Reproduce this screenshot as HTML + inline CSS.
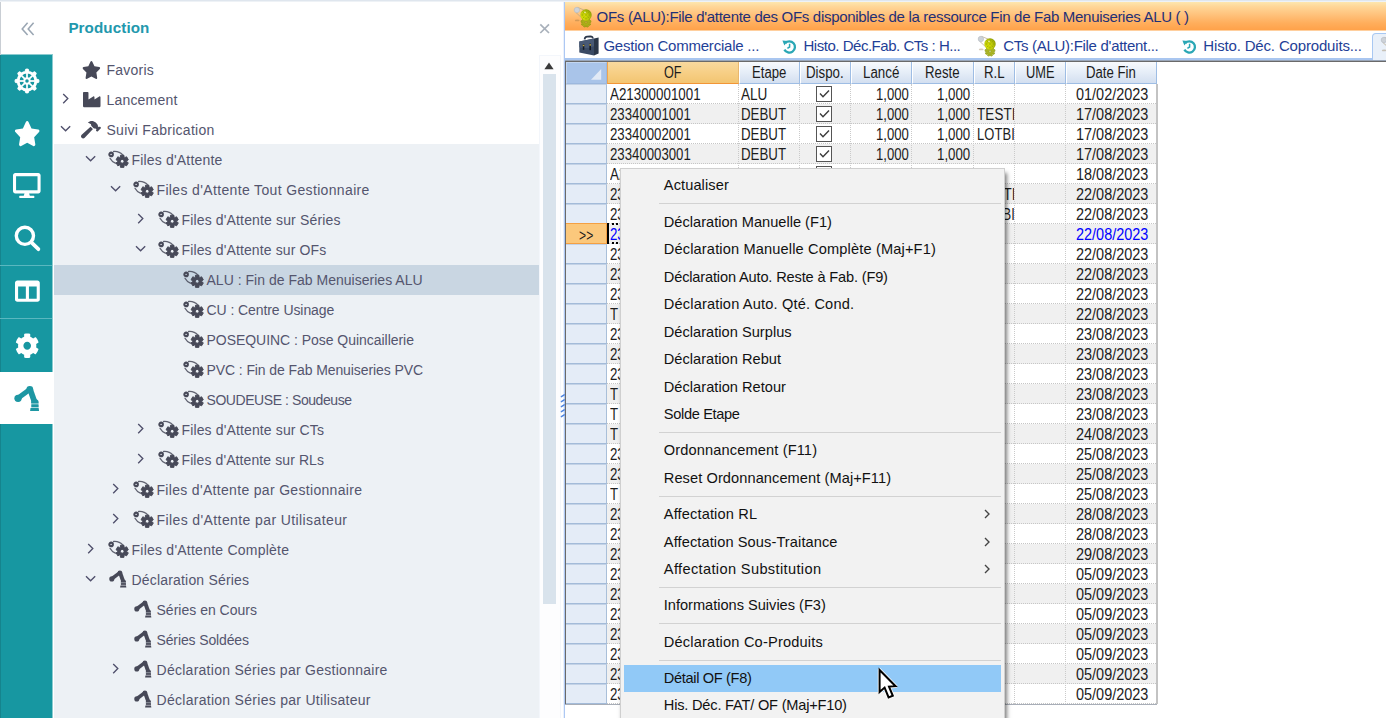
<!DOCTYPE html>
<html lang="fr"><head><meta charset="utf-8"><title>Production</title>
<style>
html,body{margin:0;padding:0}
body{width:1386px;height:718px;overflow:hidden;background:#fff;position:relative;font-family:"Liberation Sans", sans-serif}
.t{position:absolute;white-space:pre;margin:0}
svg{display:block;overflow:visible}
</style></head><body>
<div style="position:absolute;left:54px;top:144px;width:486px;height:574px;background:#edf1f5"></div>
<div style="position:absolute;left:54px;top:265px;width:486px;height:30px;background:#c9d6e2"></div>
<svg style="position:absolute;left:82.3px;top:61.0px" width="18.8" height="18.0" viewBox="0 0 576 512" preserveAspectRatio="none"><path fill="#474958" d="M259.3 17.8L194 150.2 47.9 171.5c-26.2 3.8-36.7 36.1-17.7 54.6l105.7 103-25 145.5c-4.500 26.300 23.200 46 46.400 33.700L288 439.600l130.700 68.700c23.200 12.200 50.900-7.400 46.400-33.700l-25-145.500 105.700-103c19-18.500 8.500-50.800-17.700-54.600L382 150.200 316.700 17.800c-11.700-23.600-45.600-23.900-57.400 0z"/></svg>
<div class="t" style="left:106.50px;top:60.10px;font-size:14px;line-height:20px;color:#54556e;letter-spacing:0.232px;">Favoris</div>
<svg style="position:absolute;left:61.7px;top:93.4px" width="7" height="11.2" viewBox="0 0 7 11.2" ><path d="M1.2 1 L5.8 5.6 L1.2 10.2" fill="none" stroke="#4f4f6b" stroke-width="1.35"/></svg>
<svg style="position:absolute;left:82.9px;top:91.8px" width="17.5" height="15.2" viewBox="0 32 512 448" preserveAspectRatio="none"><path fill="#474958" d="M475.115 163.781L336 252.309v-68.280c0-18.916-20.931-30.399-36.885-20.248L160 252.309V56c0-13.255-10.745-24-24-24H24C10.745 32 0 42.745 0 56v400c0 13.255 10.745 24 24 24h464c13.255 0 24-10.745 24-24V184.029c0-18.917-20.931-30.399-36.885-20.248z"/></svg>
<div class="t" style="left:106.50px;top:90.10px;font-size:14px;line-height:20px;color:#54556e;letter-spacing:0.190px;">Lancement</div>
<svg style="position:absolute;left:60.1px;top:124.69999999999999px" width="11.2" height="7" viewBox="0 0 11.2 7" ><path d="M1 1.2 L5.6 5.8 L10.2 1.2" fill="none" stroke="#4f4f6b" stroke-width="1.35"/></svg>
<svg style="position:absolute;left:81.4px;top:120.8px" width="20" height="17.4" viewBox="0 0 576 512" preserveAspectRatio="none"><path fill="#474958" d="M571.31 193.94l-22.63-22.63c-6.25-6.25-16.38-6.25-22.63 0l-11.31 11.31-28.9-28.9c5.630-21.310.360-44.900-16.350-61.610l-45.250-45.250c-62.480-62.480-163.790-62.480-226.280 0l90.510 45.250v18.750c0 16.970 6.740 33.250 18.750 45.250l49.140 49.140c16.710 16.710 40.300 21.980 61.610 16.350l28.900 28.900-11.310 11.310c-6.250 6.250-6.250 16.380 0 22.630l22.630 22.630c6.250 6.250 16.380 6.250 22.630 0l90.510-90.510c6.230-6.240 6.230-16.370-.020-22.620zm-286.720-15.200c-3.700-3.700-6.840-7.790-9.850-11.950L19.640 404.960c-25.570 23.880-26.260 64.190-1.530 88.930s65.050 24.050 88.930-1.530l238.130-255.070c-3.960-2.910-7.900-5.870-11.440-9.410l-49.140-49.140z"/></svg>
<div class="t" style="left:106.50px;top:120.10px;font-size:14px;line-height:20px;color:#54556e;letter-spacing:0.269px;">Suivi Fabrication</div>
<svg style="position:absolute;left:85.10000000000001px;top:154.7px" width="11.2" height="7" viewBox="0 0 11.2 7" ><path d="M1 1.2 L5.6 5.8 L10.2 1.2" fill="none" stroke="#4f4f6b" stroke-width="1.35"/></svg>
<svg style="position:absolute;left:108.0px;top:150.3px" width="22" height="20" viewBox="0 0 22 20" ><circle cx="3.1" cy="4.4" r="1.75" fill="none" stroke="#474958" stroke-width="2.1"/><path d="M5.6 1.5 C8.6 1.2 12.6 2.6 15.2 5.4" fill="none" stroke="#474958" stroke-width="1.3" stroke-linecap="round" opacity="0.85"/><path d="M2.0 8.2 C3.2 10.4 5.2 12.2 7.4 13.2" fill="none" stroke="#474958" stroke-width="1.3" stroke-linecap="round" opacity="0.85"/><path d="M12.32 7.21 L12.48 5.24 L15.92 5.24 L16.08 7.21 L16.80 7.63 L18.59 6.78 L20.31 9.76 L18.68 10.89 L18.68 11.71 L20.31 12.84 L18.59 15.82 L16.80 14.97 L16.08 15.39 L15.92 17.36 L12.48 17.36 L12.32 15.39 L11.60 14.97 L9.81 15.82 L8.09 12.84 L9.72 11.71 L9.72 10.89 L8.09 9.76 L9.81 6.78 L11.60 7.63Z M12.30 11.30 a1.90 1.90 0 1 0 3.80 0 a1.90 1.90 0 1 0 -3.80 0Z" fill="#474958" fill-rule="evenodd" stroke="#474958" stroke-width="1.0" stroke-linejoin="round"/></svg>
<div class="t" style="left:131.50px;top:150.10px;font-size:14px;line-height:20px;color:#54556e;letter-spacing:0.180px;">Files d&#x27;Attente</div>
<svg style="position:absolute;left:110.10000000000001px;top:184.7px" width="11.2" height="7" viewBox="0 0 11.2 7" ><path d="M1 1.2 L5.6 5.8 L10.2 1.2" fill="none" stroke="#4f4f6b" stroke-width="1.35"/></svg>
<svg style="position:absolute;left:133.0px;top:180.3px" width="22" height="20" viewBox="0 0 22 20" ><circle cx="3.1" cy="4.4" r="1.75" fill="none" stroke="#474958" stroke-width="2.1"/><path d="M5.6 1.5 C8.6 1.2 12.6 2.6 15.2 5.4" fill="none" stroke="#474958" stroke-width="1.3" stroke-linecap="round" opacity="0.85"/><path d="M2.0 8.2 C3.2 10.4 5.2 12.2 7.4 13.2" fill="none" stroke="#474958" stroke-width="1.3" stroke-linecap="round" opacity="0.85"/><path d="M12.32 7.21 L12.48 5.24 L15.92 5.24 L16.08 7.21 L16.80 7.63 L18.59 6.78 L20.31 9.76 L18.68 10.89 L18.68 11.71 L20.31 12.84 L18.59 15.82 L16.80 14.97 L16.08 15.39 L15.92 17.36 L12.48 17.36 L12.32 15.39 L11.60 14.97 L9.81 15.82 L8.09 12.84 L9.72 11.71 L9.72 10.89 L8.09 9.76 L9.81 6.78 L11.60 7.63Z M12.30 11.30 a1.90 1.90 0 1 0 3.80 0 a1.90 1.90 0 1 0 -3.80 0Z" fill="#474958" fill-rule="evenodd" stroke="#474958" stroke-width="1.0" stroke-linejoin="round"/></svg>
<div class="t" style="left:156.50px;top:180.10px;font-size:14px;line-height:20px;color:#54556e;letter-spacing:0.352px;">Files d&#x27;Attente Tout Gestionnaire</div>
<svg style="position:absolute;left:136.7px;top:213.4px" width="7" height="11.2" viewBox="0 0 7 11.2" ><path d="M1.2 1 L5.8 5.6 L1.2 10.2" fill="none" stroke="#4f4f6b" stroke-width="1.35"/></svg>
<svg style="position:absolute;left:158.0px;top:210.3px" width="22" height="20" viewBox="0 0 22 20" ><circle cx="3.1" cy="4.4" r="1.75" fill="none" stroke="#474958" stroke-width="2.1"/><path d="M5.6 1.5 C8.6 1.2 12.6 2.6 15.2 5.4" fill="none" stroke="#474958" stroke-width="1.3" stroke-linecap="round" opacity="0.85"/><path d="M2.0 8.2 C3.2 10.4 5.2 12.2 7.4 13.2" fill="none" stroke="#474958" stroke-width="1.3" stroke-linecap="round" opacity="0.85"/><path d="M12.32 7.21 L12.48 5.24 L15.92 5.24 L16.08 7.21 L16.80 7.63 L18.59 6.78 L20.31 9.76 L18.68 10.89 L18.68 11.71 L20.31 12.84 L18.59 15.82 L16.80 14.97 L16.08 15.39 L15.92 17.36 L12.48 17.36 L12.32 15.39 L11.60 14.97 L9.81 15.82 L8.09 12.84 L9.72 11.71 L9.72 10.89 L8.09 9.76 L9.81 6.78 L11.60 7.63Z M12.30 11.30 a1.90 1.90 0 1 0 3.80 0 a1.90 1.90 0 1 0 -3.80 0Z" fill="#474958" fill-rule="evenodd" stroke="#474958" stroke-width="1.0" stroke-linejoin="round"/></svg>
<div class="t" style="left:181.50px;top:210.10px;font-size:14px;line-height:20px;color:#54556e;letter-spacing:0.148px;">Files d&#x27;Attente sur Séries</div>
<svg style="position:absolute;left:135.1px;top:244.7px" width="11.2" height="7" viewBox="0 0 11.2 7" ><path d="M1 1.2 L5.6 5.8 L10.2 1.2" fill="none" stroke="#4f4f6b" stroke-width="1.35"/></svg>
<svg style="position:absolute;left:158.0px;top:240.3px" width="22" height="20" viewBox="0 0 22 20" ><circle cx="3.1" cy="4.4" r="1.75" fill="none" stroke="#474958" stroke-width="2.1"/><path d="M5.6 1.5 C8.6 1.2 12.6 2.6 15.2 5.4" fill="none" stroke="#474958" stroke-width="1.3" stroke-linecap="round" opacity="0.85"/><path d="M2.0 8.2 C3.2 10.4 5.2 12.2 7.4 13.2" fill="none" stroke="#474958" stroke-width="1.3" stroke-linecap="round" opacity="0.85"/><path d="M12.32 7.21 L12.48 5.24 L15.92 5.24 L16.08 7.21 L16.80 7.63 L18.59 6.78 L20.31 9.76 L18.68 10.89 L18.68 11.71 L20.31 12.84 L18.59 15.82 L16.80 14.97 L16.08 15.39 L15.92 17.36 L12.48 17.36 L12.32 15.39 L11.60 14.97 L9.81 15.82 L8.09 12.84 L9.72 11.71 L9.72 10.89 L8.09 9.76 L9.81 6.78 L11.60 7.63Z M12.30 11.30 a1.90 1.90 0 1 0 3.80 0 a1.90 1.90 0 1 0 -3.80 0Z" fill="#474958" fill-rule="evenodd" stroke="#474958" stroke-width="1.0" stroke-linejoin="round"/></svg>
<div class="t" style="left:181.50px;top:240.10px;font-size:14px;line-height:20px;color:#54556e;letter-spacing:0.129px;">Files d&#x27;Attente sur OFs</div>
<svg style="position:absolute;left:183.0px;top:270.29999999999995px" width="22" height="20" viewBox="0 0 22 20" ><circle cx="3.1" cy="4.4" r="1.75" fill="none" stroke="#474958" stroke-width="2.1"/><path d="M5.6 1.5 C8.6 1.2 12.6 2.6 15.2 5.4" fill="none" stroke="#474958" stroke-width="1.3" stroke-linecap="round" opacity="0.85"/><path d="M2.0 8.2 C3.2 10.4 5.2 12.2 7.4 13.2" fill="none" stroke="#474958" stroke-width="1.3" stroke-linecap="round" opacity="0.85"/><path d="M12.32 7.21 L12.48 5.24 L15.92 5.24 L16.08 7.21 L16.80 7.63 L18.59 6.78 L20.31 9.76 L18.68 10.89 L18.68 11.71 L20.31 12.84 L18.59 15.82 L16.80 14.97 L16.08 15.39 L15.92 17.36 L12.48 17.36 L12.32 15.39 L11.60 14.97 L9.81 15.82 L8.09 12.84 L9.72 11.71 L9.72 10.89 L8.09 9.76 L9.81 6.78 L11.60 7.63Z M12.30 11.30 a1.90 1.90 0 1 0 3.80 0 a1.90 1.90 0 1 0 -3.80 0Z" fill="#474958" fill-rule="evenodd" stroke="#474958" stroke-width="1.0" stroke-linejoin="round"/></svg>
<div class="t" style="left:206.50px;top:270.10px;font-size:14px;line-height:20px;color:#54556e;letter-spacing:0.018px;">ALU : Fin de Fab Menuiseries ALU</div>
<svg style="position:absolute;left:183.0px;top:300.29999999999995px" width="22" height="20" viewBox="0 0 22 20" ><circle cx="3.1" cy="4.4" r="1.75" fill="none" stroke="#474958" stroke-width="2.1"/><path d="M5.6 1.5 C8.6 1.2 12.6 2.6 15.2 5.4" fill="none" stroke="#474958" stroke-width="1.3" stroke-linecap="round" opacity="0.85"/><path d="M2.0 8.2 C3.2 10.4 5.2 12.2 7.4 13.2" fill="none" stroke="#474958" stroke-width="1.3" stroke-linecap="round" opacity="0.85"/><path d="M12.32 7.21 L12.48 5.24 L15.92 5.24 L16.08 7.21 L16.80 7.63 L18.59 6.78 L20.31 9.76 L18.68 10.89 L18.68 11.71 L20.31 12.84 L18.59 15.82 L16.80 14.97 L16.08 15.39 L15.92 17.36 L12.48 17.36 L12.32 15.39 L11.60 14.97 L9.81 15.82 L8.09 12.84 L9.72 11.71 L9.72 10.89 L8.09 9.76 L9.81 6.78 L11.60 7.63Z M12.30 11.30 a1.90 1.90 0 1 0 3.80 0 a1.90 1.90 0 1 0 -3.80 0Z" fill="#474958" fill-rule="evenodd" stroke="#474958" stroke-width="1.0" stroke-linejoin="round"/></svg>
<div class="t" style="left:206.50px;top:300.10px;font-size:14px;line-height:20px;color:#54556e;letter-spacing:-0.076px;">CU : Centre Usinage</div>
<svg style="position:absolute;left:183.0px;top:330.29999999999995px" width="22" height="20" viewBox="0 0 22 20" ><circle cx="3.1" cy="4.4" r="1.75" fill="none" stroke="#474958" stroke-width="2.1"/><path d="M5.6 1.5 C8.6 1.2 12.6 2.6 15.2 5.4" fill="none" stroke="#474958" stroke-width="1.3" stroke-linecap="round" opacity="0.85"/><path d="M2.0 8.2 C3.2 10.4 5.2 12.2 7.4 13.2" fill="none" stroke="#474958" stroke-width="1.3" stroke-linecap="round" opacity="0.85"/><path d="M12.32 7.21 L12.48 5.24 L15.92 5.24 L16.08 7.21 L16.80 7.63 L18.59 6.78 L20.31 9.76 L18.68 10.89 L18.68 11.71 L20.31 12.84 L18.59 15.82 L16.80 14.97 L16.08 15.39 L15.92 17.36 L12.48 17.36 L12.32 15.39 L11.60 14.97 L9.81 15.82 L8.09 12.84 L9.72 11.71 L9.72 10.89 L8.09 9.76 L9.81 6.78 L11.60 7.63Z M12.30 11.30 a1.90 1.90 0 1 0 3.80 0 a1.90 1.90 0 1 0 -3.80 0Z" fill="#474958" fill-rule="evenodd" stroke="#474958" stroke-width="1.0" stroke-linejoin="round"/></svg>
<div class="t" style="left:206.50px;top:330.10px;font-size:14px;line-height:20px;color:#54556e;letter-spacing:-0.036px;">POSEQUINC : Pose Quincaillerie</div>
<svg style="position:absolute;left:183.0px;top:360.29999999999995px" width="22" height="20" viewBox="0 0 22 20" ><circle cx="3.1" cy="4.4" r="1.75" fill="none" stroke="#474958" stroke-width="2.1"/><path d="M5.6 1.5 C8.6 1.2 12.6 2.6 15.2 5.4" fill="none" stroke="#474958" stroke-width="1.3" stroke-linecap="round" opacity="0.85"/><path d="M2.0 8.2 C3.2 10.4 5.2 12.2 7.4 13.2" fill="none" stroke="#474958" stroke-width="1.3" stroke-linecap="round" opacity="0.85"/><path d="M12.32 7.21 L12.48 5.24 L15.92 5.24 L16.08 7.21 L16.80 7.63 L18.59 6.78 L20.31 9.76 L18.68 10.89 L18.68 11.71 L20.31 12.84 L18.59 15.82 L16.80 14.97 L16.08 15.39 L15.92 17.36 L12.48 17.36 L12.32 15.39 L11.60 14.97 L9.81 15.82 L8.09 12.84 L9.72 11.71 L9.72 10.89 L8.09 9.76 L9.81 6.78 L11.60 7.63Z M12.30 11.30 a1.90 1.90 0 1 0 3.80 0 a1.90 1.90 0 1 0 -3.80 0Z" fill="#474958" fill-rule="evenodd" stroke="#474958" stroke-width="1.0" stroke-linejoin="round"/></svg>
<div class="t" style="left:206.50px;top:360.10px;font-size:14px;line-height:20px;color:#54556e;letter-spacing:-0.094px;">PVC : Fin de Fab Menuiseries PVC</div>
<svg style="position:absolute;left:183.0px;top:390.29999999999995px" width="22" height="20" viewBox="0 0 22 20" ><circle cx="3.1" cy="4.4" r="1.75" fill="none" stroke="#474958" stroke-width="2.1"/><path d="M5.6 1.5 C8.6 1.2 12.6 2.6 15.2 5.4" fill="none" stroke="#474958" stroke-width="1.3" stroke-linecap="round" opacity="0.85"/><path d="M2.0 8.2 C3.2 10.4 5.2 12.2 7.4 13.2" fill="none" stroke="#474958" stroke-width="1.3" stroke-linecap="round" opacity="0.85"/><path d="M12.32 7.21 L12.48 5.24 L15.92 5.24 L16.08 7.21 L16.80 7.63 L18.59 6.78 L20.31 9.76 L18.68 10.89 L18.68 11.71 L20.31 12.84 L18.59 15.82 L16.80 14.97 L16.08 15.39 L15.92 17.36 L12.48 17.36 L12.32 15.39 L11.60 14.97 L9.81 15.82 L8.09 12.84 L9.72 11.71 L9.72 10.89 L8.09 9.76 L9.81 6.78 L11.60 7.63Z M12.30 11.30 a1.90 1.90 0 1 0 3.80 0 a1.90 1.90 0 1 0 -3.80 0Z" fill="#474958" fill-rule="evenodd" stroke="#474958" stroke-width="1.0" stroke-linejoin="round"/></svg>
<div class="t" style="left:206.50px;top:390.10px;font-size:14px;line-height:20px;color:#54556e;letter-spacing:-0.433px;">SOUDEUSE : Soudeuse</div>
<svg style="position:absolute;left:136.7px;top:423.4px" width="7" height="11.2" viewBox="0 0 7 11.2" ><path d="M1.2 1 L5.8 5.6 L1.2 10.2" fill="none" stroke="#4f4f6b" stroke-width="1.35"/></svg>
<svg style="position:absolute;left:158.0px;top:420.29999999999995px" width="22" height="20" viewBox="0 0 22 20" ><circle cx="3.1" cy="4.4" r="1.75" fill="none" stroke="#474958" stroke-width="2.1"/><path d="M5.6 1.5 C8.6 1.2 12.6 2.6 15.2 5.4" fill="none" stroke="#474958" stroke-width="1.3" stroke-linecap="round" opacity="0.85"/><path d="M2.0 8.2 C3.2 10.4 5.2 12.2 7.4 13.2" fill="none" stroke="#474958" stroke-width="1.3" stroke-linecap="round" opacity="0.85"/><path d="M12.32 7.21 L12.48 5.24 L15.92 5.24 L16.08 7.21 L16.80 7.63 L18.59 6.78 L20.31 9.76 L18.68 10.89 L18.68 11.71 L20.31 12.84 L18.59 15.82 L16.80 14.97 L16.08 15.39 L15.92 17.36 L12.48 17.36 L12.32 15.39 L11.60 14.97 L9.81 15.82 L8.09 12.84 L9.72 11.71 L9.72 10.89 L8.09 9.76 L9.81 6.78 L11.60 7.63Z M12.30 11.30 a1.90 1.90 0 1 0 3.80 0 a1.90 1.90 0 1 0 -3.80 0Z" fill="#474958" fill-rule="evenodd" stroke="#474958" stroke-width="1.0" stroke-linejoin="round"/></svg>
<div class="t" style="left:181.50px;top:420.10px;font-size:14px;line-height:20px;color:#54556e;letter-spacing:0.131px;">Files d&#x27;Attente sur CTs</div>
<svg style="position:absolute;left:136.7px;top:453.4px" width="7" height="11.2" viewBox="0 0 7 11.2" ><path d="M1.2 1 L5.8 5.6 L1.2 10.2" fill="none" stroke="#4f4f6b" stroke-width="1.35"/></svg>
<svg style="position:absolute;left:158.0px;top:450.29999999999995px" width="22" height="20" viewBox="0 0 22 20" ><circle cx="3.1" cy="4.4" r="1.75" fill="none" stroke="#474958" stroke-width="2.1"/><path d="M5.6 1.5 C8.6 1.2 12.6 2.6 15.2 5.4" fill="none" stroke="#474958" stroke-width="1.3" stroke-linecap="round" opacity="0.85"/><path d="M2.0 8.2 C3.2 10.4 5.2 12.2 7.4 13.2" fill="none" stroke="#474958" stroke-width="1.3" stroke-linecap="round" opacity="0.85"/><path d="M12.32 7.21 L12.48 5.24 L15.92 5.24 L16.08 7.21 L16.80 7.63 L18.59 6.78 L20.31 9.76 L18.68 10.89 L18.68 11.71 L20.31 12.84 L18.59 15.82 L16.80 14.97 L16.08 15.39 L15.92 17.36 L12.48 17.36 L12.32 15.39 L11.60 14.97 L9.81 15.82 L8.09 12.84 L9.72 11.71 L9.72 10.89 L8.09 9.76 L9.81 6.78 L11.60 7.63Z M12.30 11.30 a1.90 1.90 0 1 0 3.80 0 a1.90 1.90 0 1 0 -3.80 0Z" fill="#474958" fill-rule="evenodd" stroke="#474958" stroke-width="1.0" stroke-linejoin="round"/></svg>
<div class="t" style="left:181.50px;top:450.10px;font-size:14px;line-height:20px;color:#54556e;letter-spacing:0.095px;">Files d&#x27;Attente sur RLs</div>
<svg style="position:absolute;left:111.7px;top:483.4px" width="7" height="11.2" viewBox="0 0 7 11.2" ><path d="M1.2 1 L5.8 5.6 L1.2 10.2" fill="none" stroke="#4f4f6b" stroke-width="1.35"/></svg>
<svg style="position:absolute;left:133.0px;top:480.29999999999995px" width="22" height="20" viewBox="0 0 22 20" ><circle cx="3.1" cy="4.4" r="1.75" fill="none" stroke="#474958" stroke-width="2.1"/><path d="M5.6 1.5 C8.6 1.2 12.6 2.6 15.2 5.4" fill="none" stroke="#474958" stroke-width="1.3" stroke-linecap="round" opacity="0.85"/><path d="M2.0 8.2 C3.2 10.4 5.2 12.2 7.4 13.2" fill="none" stroke="#474958" stroke-width="1.3" stroke-linecap="round" opacity="0.85"/><path d="M12.32 7.21 L12.48 5.24 L15.92 5.24 L16.08 7.21 L16.80 7.63 L18.59 6.78 L20.31 9.76 L18.68 10.89 L18.68 11.71 L20.31 12.84 L18.59 15.82 L16.80 14.97 L16.08 15.39 L15.92 17.36 L12.48 17.36 L12.32 15.39 L11.60 14.97 L9.81 15.82 L8.09 12.84 L9.72 11.71 L9.72 10.89 L8.09 9.76 L9.81 6.78 L11.60 7.63Z M12.30 11.30 a1.90 1.90 0 1 0 3.80 0 a1.90 1.90 0 1 0 -3.80 0Z" fill="#474958" fill-rule="evenodd" stroke="#474958" stroke-width="1.0" stroke-linejoin="round"/></svg>
<div class="t" style="left:156.50px;top:480.10px;font-size:14px;line-height:20px;color:#54556e;letter-spacing:0.317px;">Files d&#x27;Attente par Gestionnaire</div>
<svg style="position:absolute;left:111.7px;top:513.4px" width="7" height="11.2" viewBox="0 0 7 11.2" ><path d="M1.2 1 L5.8 5.6 L1.2 10.2" fill="none" stroke="#4f4f6b" stroke-width="1.35"/></svg>
<svg style="position:absolute;left:133.0px;top:510.29999999999995px" width="22" height="20" viewBox="0 0 22 20" ><circle cx="3.1" cy="4.4" r="1.75" fill="none" stroke="#474958" stroke-width="2.1"/><path d="M5.6 1.5 C8.6 1.2 12.6 2.6 15.2 5.4" fill="none" stroke="#474958" stroke-width="1.3" stroke-linecap="round" opacity="0.85"/><path d="M2.0 8.2 C3.2 10.4 5.2 12.2 7.4 13.2" fill="none" stroke="#474958" stroke-width="1.3" stroke-linecap="round" opacity="0.85"/><path d="M12.32 7.21 L12.48 5.24 L15.92 5.24 L16.08 7.21 L16.80 7.63 L18.59 6.78 L20.31 9.76 L18.68 10.89 L18.68 11.71 L20.31 12.84 L18.59 15.82 L16.80 14.97 L16.08 15.39 L15.92 17.36 L12.48 17.36 L12.32 15.39 L11.60 14.97 L9.81 15.82 L8.09 12.84 L9.72 11.71 L9.72 10.89 L8.09 9.76 L9.81 6.78 L11.60 7.63Z M12.30 11.30 a1.90 1.90 0 1 0 3.80 0 a1.90 1.90 0 1 0 -3.80 0Z" fill="#474958" fill-rule="evenodd" stroke="#474958" stroke-width="1.0" stroke-linejoin="round"/></svg>
<div class="t" style="left:156.50px;top:510.10px;font-size:14px;line-height:20px;color:#54556e;letter-spacing:0.399px;">Files d&#x27;Attente par Utilisateur</div>
<svg style="position:absolute;left:86.7px;top:543.4px" width="7" height="11.2" viewBox="0 0 7 11.2" ><path d="M1.2 1 L5.8 5.6 L1.2 10.2" fill="none" stroke="#4f4f6b" stroke-width="1.35"/></svg>
<svg style="position:absolute;left:108.0px;top:540.3px" width="22" height="20" viewBox="0 0 22 20" ><circle cx="3.1" cy="4.4" r="1.75" fill="none" stroke="#474958" stroke-width="2.1"/><path d="M5.6 1.5 C8.6 1.2 12.6 2.6 15.2 5.4" fill="none" stroke="#474958" stroke-width="1.3" stroke-linecap="round" opacity="0.85"/><path d="M2.0 8.2 C3.2 10.4 5.2 12.2 7.4 13.2" fill="none" stroke="#474958" stroke-width="1.3" stroke-linecap="round" opacity="0.85"/><path d="M12.32 7.21 L12.48 5.24 L15.92 5.24 L16.08 7.21 L16.80 7.63 L18.59 6.78 L20.31 9.76 L18.68 10.89 L18.68 11.71 L20.31 12.84 L18.59 15.82 L16.80 14.97 L16.08 15.39 L15.92 17.36 L12.48 17.36 L12.32 15.39 L11.60 14.97 L9.81 15.82 L8.09 12.84 L9.72 11.71 L9.72 10.89 L8.09 9.76 L9.81 6.78 L11.60 7.63Z M12.30 11.30 a1.90 1.90 0 1 0 3.80 0 a1.90 1.90 0 1 0 -3.80 0Z" fill="#474958" fill-rule="evenodd" stroke="#474958" stroke-width="1.0" stroke-linejoin="round"/></svg>
<div class="t" style="left:131.50px;top:540.10px;font-size:14px;line-height:20px;color:#54556e;letter-spacing:0.235px;">Files d&#x27;Attente Complète</div>
<svg style="position:absolute;left:85.10000000000001px;top:574.7px" width="11.2" height="7" viewBox="0 0 11.2 7" ><path d="M1 1.2 L5.6 5.8 L10.2 1.2" fill="none" stroke="#4f4f6b" stroke-width="1.35"/></svg>
<svg style="position:absolute;left:108.6px;top:569.4px" width="20.0" height="20.0" viewBox="0 0 20 20" ><circle cx="2.8" cy="9.9" r="2.55" fill="#474958"/><path d="M3.8 9.0 L10.6 3.9" stroke="#474958" stroke-width="3.5" stroke-linecap="butt" fill="none"/><circle cx="10.9" cy="3.8" r="2.35" fill="#474958"/><path d="M11.2 4.0 L14.2 12.4" stroke="#474958" stroke-width="3.9" stroke-linecap="butt" fill="none"/><circle cx="14.4" cy="13.0" r="2.6" fill="#474958"/><path d="M11.9 14.2 h5.1 v2.4 h-5.1z" fill="#474958"/><path d="M11.4 16.6 h5.6 l0.3 2.0 h-6.2z" fill="#474958"/><path d="M11.6 13.7 h5.6 M11.4 16.2 h6" stroke="#edf1f5" stroke-width="0.55" opacity="0.8"/></svg>
<div class="t" style="left:131.50px;top:570.10px;font-size:14px;line-height:20px;color:#54556e;letter-spacing:0.183px;">Déclaration Séries</div>
<svg style="position:absolute;left:133.6px;top:599.4px" width="20.0" height="20.0" viewBox="0 0 20 20" ><circle cx="2.8" cy="9.9" r="2.55" fill="#474958"/><path d="M3.8 9.0 L10.6 3.9" stroke="#474958" stroke-width="3.5" stroke-linecap="butt" fill="none"/><circle cx="10.9" cy="3.8" r="2.35" fill="#474958"/><path d="M11.2 4.0 L14.2 12.4" stroke="#474958" stroke-width="3.9" stroke-linecap="butt" fill="none"/><circle cx="14.4" cy="13.0" r="2.6" fill="#474958"/><path d="M11.9 14.2 h5.1 v2.4 h-5.1z" fill="#474958"/><path d="M11.4 16.6 h5.6 l0.3 2.0 h-6.2z" fill="#474958"/><path d="M11.6 13.7 h5.6 M11.4 16.2 h6" stroke="#edf1f5" stroke-width="0.55" opacity="0.8"/></svg>
<div class="t" style="left:156.50px;top:600.10px;font-size:14px;line-height:20px;color:#54556e;letter-spacing:0.008px;">Séries en Cours</div>
<svg style="position:absolute;left:133.6px;top:629.4px" width="20.0" height="20.0" viewBox="0 0 20 20" ><circle cx="2.8" cy="9.9" r="2.55" fill="#474958"/><path d="M3.8 9.0 L10.6 3.9" stroke="#474958" stroke-width="3.5" stroke-linecap="butt" fill="none"/><circle cx="10.9" cy="3.8" r="2.35" fill="#474958"/><path d="M11.2 4.0 L14.2 12.4" stroke="#474958" stroke-width="3.9" stroke-linecap="butt" fill="none"/><circle cx="14.4" cy="13.0" r="2.6" fill="#474958"/><path d="M11.9 14.2 h5.1 v2.4 h-5.1z" fill="#474958"/><path d="M11.4 16.6 h5.6 l0.3 2.0 h-6.2z" fill="#474958"/><path d="M11.6 13.7 h5.6 M11.4 16.2 h6" stroke="#edf1f5" stroke-width="0.55" opacity="0.8"/></svg>
<div class="t" style="left:156.50px;top:630.10px;font-size:14px;line-height:20px;color:#54556e;letter-spacing:-0.129px;">Séries Soldées</div>
<svg style="position:absolute;left:111.7px;top:663.4px" width="7" height="11.2" viewBox="0 0 7 11.2" ><path d="M1.2 1 L5.8 5.6 L1.2 10.2" fill="none" stroke="#4f4f6b" stroke-width="1.35"/></svg>
<svg style="position:absolute;left:133.6px;top:659.4px" width="20.0" height="20.0" viewBox="0 0 20 20" ><circle cx="2.8" cy="9.9" r="2.55" fill="#474958"/><path d="M3.8 9.0 L10.6 3.9" stroke="#474958" stroke-width="3.5" stroke-linecap="butt" fill="none"/><circle cx="10.9" cy="3.8" r="2.35" fill="#474958"/><path d="M11.2 4.0 L14.2 12.4" stroke="#474958" stroke-width="3.9" stroke-linecap="butt" fill="none"/><circle cx="14.4" cy="13.0" r="2.6" fill="#474958"/><path d="M11.9 14.2 h5.1 v2.4 h-5.1z" fill="#474958"/><path d="M11.4 16.6 h5.6 l0.3 2.0 h-6.2z" fill="#474958"/><path d="M11.6 13.7 h5.6 M11.4 16.2 h6" stroke="#edf1f5" stroke-width="0.55" opacity="0.8"/></svg>
<div class="t" style="left:156.50px;top:660.10px;font-size:14px;line-height:20px;color:#54556e;letter-spacing:0.268px;">Déclaration Séries par Gestionnaire</div>
<svg style="position:absolute;left:133.6px;top:689.4px" width="20.0" height="20.0" viewBox="0 0 20 20" ><circle cx="2.8" cy="9.9" r="2.55" fill="#474958"/><path d="M3.8 9.0 L10.6 3.9" stroke="#474958" stroke-width="3.5" stroke-linecap="butt" fill="none"/><circle cx="10.9" cy="3.8" r="2.35" fill="#474958"/><path d="M11.2 4.0 L14.2 12.4" stroke="#474958" stroke-width="3.9" stroke-linecap="butt" fill="none"/><circle cx="14.4" cy="13.0" r="2.6" fill="#474958"/><path d="M11.9 14.2 h5.1 v2.4 h-5.1z" fill="#474958"/><path d="M11.4 16.6 h5.6 l0.3 2.0 h-6.2z" fill="#474958"/><path d="M11.6 13.7 h5.6 M11.4 16.2 h6" stroke="#edf1f5" stroke-width="0.55" opacity="0.8"/></svg>
<div class="t" style="left:156.50px;top:690.10px;font-size:14px;line-height:20px;color:#54556e;letter-spacing:0.284px;">Déclaration Séries par Utilisateur</div>
<div class="t" style="left:68.40px;top:16.50px;font-size:15.2px;line-height:21px;color:#2298ad;font-weight:700;letter-spacing:0.094px;">Production</div>
<svg style="position:absolute;left:21px;top:21.5px" width="14" height="14" viewBox="0 0 14 14" ><path d="M6.6 0.8 L1.2 6.9 L6.6 13 M12.6 0.8 L7.2 6.9 L12.6 13" fill="none" stroke="#9aa6b3" stroke-width="1.55"/></svg>
<svg style="position:absolute;left:538.9px;top:22.7px" width="12" height="12" viewBox="0 0 12 12" ><path d="M1.3 1.3 L10 10 M10 1.3 L1.3 10" fill="none" stroke="#a9b1bb" stroke-width="1.7"/></svg>
<div style="position:absolute;left:0;top:54px;width:53px;height:664px;background:rgba(23,151,161,0.5)"></div>
<div style="position:absolute;left:0;top:55px;width:52px;height:663px;background:#1797a1"></div>
<div style="position:absolute;left:0;top:55px;width:1px;height:663px;background:#15848d"></div>
<div style="position:absolute;left:0;top:265px;width:52px;height:1px;background:#5ab7bf"></div>
<div style="position:absolute;left:0;top:318px;width:52px;height:1px;background:#5ab7bf"></div>
<div style="position:absolute;left:0;top:372px;width:53px;height:52px;background:#fff"></div>
<svg style="position:absolute;left:12.8px;top:66.8px" width="28" height="28" viewBox="-14.5 -14.5 29 29"><circle cx="0" cy="0" r="9.2" fill="none" stroke="#fff" stroke-width="3.0"/><circle cx="0" cy="0" r="2.8" fill="none" stroke="#fff" stroke-width="2.0"/><g transform="rotate(0)"><path d="M0 -3.2 L0 -8.4" stroke="#fff" stroke-width="1.8"/><path d="M-1.9 -10.4 L-1.2 -12.3 L1.2 -12.3 L1.9 -10.4z" fill="#fff" stroke="#fff" stroke-width="1.0" stroke-linejoin="round"/></g><g transform="rotate(45)"><path d="M0 -3.2 L0 -8.4" stroke="#fff" stroke-width="1.8"/><path d="M-1.9 -10.4 L-1.2 -12.3 L1.2 -12.3 L1.9 -10.4z" fill="#fff" stroke="#fff" stroke-width="1.0" stroke-linejoin="round"/></g><g transform="rotate(90)"><path d="M0 -3.2 L0 -8.4" stroke="#fff" stroke-width="1.8"/><path d="M-1.9 -10.4 L-1.2 -12.3 L1.2 -12.3 L1.9 -10.4z" fill="#fff" stroke="#fff" stroke-width="1.0" stroke-linejoin="round"/></g><g transform="rotate(135)"><path d="M0 -3.2 L0 -8.4" stroke="#fff" stroke-width="1.8"/><path d="M-1.9 -10.4 L-1.2 -12.3 L1.2 -12.3 L1.9 -10.4z" fill="#fff" stroke="#fff" stroke-width="1.0" stroke-linejoin="round"/></g><g transform="rotate(180)"><path d="M0 -3.2 L0 -8.4" stroke="#fff" stroke-width="1.8"/><path d="M-1.9 -10.4 L-1.2 -12.3 L1.2 -12.3 L1.9 -10.4z" fill="#fff" stroke="#fff" stroke-width="1.0" stroke-linejoin="round"/></g><g transform="rotate(225)"><path d="M0 -3.2 L0 -8.4" stroke="#fff" stroke-width="1.8"/><path d="M-1.9 -10.4 L-1.2 -12.3 L1.2 -12.3 L1.9 -10.4z" fill="#fff" stroke="#fff" stroke-width="1.0" stroke-linejoin="round"/></g><g transform="rotate(270)"><path d="M0 -3.2 L0 -8.4" stroke="#fff" stroke-width="1.8"/><path d="M-1.9 -10.4 L-1.2 -12.3 L1.2 -12.3 L1.9 -10.4z" fill="#fff" stroke="#fff" stroke-width="1.0" stroke-linejoin="round"/></g><g transform="rotate(315)"><path d="M0 -3.2 L0 -8.4" stroke="#fff" stroke-width="1.8"/><path d="M-1.9 -10.4 L-1.2 -12.3 L1.2 -12.3 L1.9 -10.4z" fill="#fff" stroke="#fff" stroke-width="1.0" stroke-linejoin="round"/></g></svg>
<svg style="position:absolute;left:14.0px;top:121.0px" width="26.4" height="25.2" viewBox="0 0 576 512" preserveAspectRatio="none"><path fill="#fff" d="M259.3 17.8L194 150.2 47.9 171.5c-26.2 3.8-36.7 36.1-17.7 54.6l105.7 103-25 145.5c-4.500 26.300 23.200 46 46.400 33.700L288 439.600l130.700 68.700c23.200 12.200 50.900-7.400 46.400-33.700l-25-145.500 105.700-103c19-18.500 8.500-50.800-17.700-54.600L382 150.200 316.700 17.800c-11.700-23.600-45.600-23.900-57.400 0z"/></svg>
<svg style="position:absolute;left:13.4px;top:173px" width="27.6" height="25.1" viewBox="0 0 576 512" preserveAspectRatio="none"><path fill="#fff" d="M528 0H48C21.500 0 0 21.500 0 48v320c0 26.500 21.500 48 48 48h192l-16 48h-72c-13.300 0-24 10.700-24 24s10.700 24 24 24h272c13.300 0 24-10.700 24-24s-10.700-24-24-24h-72l-16-48h192c26.500 0 48-21.500 48-48V48c0-26.500-21.500-48-48-48zm-16 352H64V64h448v288z"/></svg>
<svg style="position:absolute;left:12px;top:222px" width="30" height="30" viewBox="0 0 30 30" ><circle cx="12.9" cy="13.8" r="8.6" fill="none" stroke="#fff" stroke-width="3.4"/><path d="M19.6 20.6 L26.4 27.2" stroke="#fff" stroke-width="3.7" stroke-linecap="round"/></svg>
<svg style="position:absolute;left:15px;top:279.29999999999995px" width="24.8" height="24.4" viewBox="0 0 512 512" preserveAspectRatio="none"><path fill="#fff" d="M464 32H48C21.490 32 0 53.490 0 80v352c0 26.510 21.490 48 48 48h416c26.510 0 48-21.490 48-48V80c0-26.510-21.490-48-48-48zM224 416H64V160h160v256zm224 0H288V160h160v256z"/></svg>
<svg style="position:absolute;left:15.2px;top:333.0px" width="24.4" height="25.4" viewBox="0 0 512 512" preserveAspectRatio="none"><path fill="#fff" d="M487.4 315.7l-42.600-24.600c4.300-23.200 4.300-47 0-70.200l42.600-24.600c4.900-2.800 7.100-8.600 5.500-14-11.100-35.600-30-67.800-54.700-94.600-3.800-4.100-10-5.100-14.800-2.300L380.800 110c-17.900-15.400-38.500-27.300-60.800-35.100V25.800c0-5.600-3.900-10.500-9.400-11.700-36.700-8.200-74.300-7.800-109.200 0-5.500 1.200-9.400 6.100-9.400 11.700V75c-22.200 7.900-42.800 19.800-60.800 35.100L88.700 85.500c-4.900-2.800-11-1.900-14.800 2.300-24.700 26.700-43.600 58.900-54.700 94.600-1.700 5.400.6 11.200 5.500 14L67.300 221c-4.300 23.200-4.300 47 0 70.200l-42.600 24.600c-4.900 2.800-7.100 8.600-5.500 14 11.100 35.600 30 67.800 54.700 94.600 3.800 4.100 10 5.100 14.800 2.300l42.600-24.600c17.900 15.400 38.500 27.300 60.800 35.100v49.200c0 5.600 3.900 10.500 9.400 11.700 36.700 8.200 74.300 7.800 109.200 0 5.500-1.200 9.400-6.100 9.400-11.700v-49.200c22.200-7.900 42.800-19.800 60.800-35.100l42.600 24.600c4.900 2.800 11 1.900 14.800-2.300 24.700-26.700 43.600-58.900 54.700-94.600 1.500-5.500-.7-11.300-5.600-14.100zM256 336c-44.100 0-80-35.900-80-80s35.900-80 80-80 80 35.900 80 80-35.900 80-80 80z"/></svg>
<svg style="position:absolute;left:13.9px;top:383.9px" width="29.0" height="29.0" viewBox="0 0 20 20" ><circle cx="2.8" cy="9.9" r="2.55" fill="#1d97a3"/><path d="M3.8 9.0 L10.6 3.9" stroke="#1d97a3" stroke-width="3.5" stroke-linecap="butt" fill="none"/><circle cx="10.9" cy="3.8" r="2.35" fill="#1d97a3"/><path d="M11.2 4.0 L14.2 12.4" stroke="#1d97a3" stroke-width="3.9" stroke-linecap="butt" fill="none"/><circle cx="14.4" cy="13.0" r="2.6" fill="#1d97a3"/><path d="M11.9 14.2 h5.1 v2.4 h-5.1z" fill="#1d97a3"/><path d="M11.4 16.6 h5.6 l0.3 2.0 h-6.2z" fill="#1d97a3"/><path d="M11.6 13.7 h5.6 M11.4 16.2 h6" stroke="#fff" stroke-width="0.55" opacity="0.8"/></svg>
<div style="position:absolute;left:539px;top:55px;width:20px;height:663px;background:#fdfdfe;border-left:1px solid #f3f6fb;border-right:1px solid #f3f6fb;border-top:1px solid #f3f6fb"></div>
<div style="position:absolute;left:543px;top:74px;width:13px;height:530px;background:#d9e3ec"></div>
<svg style="position:absolute;left:544px;top:62px" width="10" height="8" viewBox="0 0 10 8" ><path d="M5 0.6 L9.6 7.2 L0.4 7.2z" fill="#3a3a3a"/></svg>
<div style="position:absolute;left:0;top:0;width:1386px;height:1px;background:#dfe6ee"></div>
<div style="position:absolute;left:0;top:1px;width:1386px;height:1px;background:#eef2f6"></div>
<div style="position:absolute;left:0;top:2px;width:1px;height:53px;background:#c9ced4"></div>
<div style="position:absolute;left:563px;top:2px;width:1px;height:716px;background:#eaf1fc"></div>
<div style="position:absolute;left:564px;top:2px;width:1px;height:716px;background:#adc8f3"></div>
<svg style="position:absolute;left:560.8px;top:393.8px" width="4" height="25" viewBox="0 0 4 25" ><path d="M0.4 2.6 L3.2 0.8" stroke="#4f86e0" stroke-width="1.5" stroke-linecap="round"/><path d="M0.4 7.6 L3.2 5.8" stroke="#4f86e0" stroke-width="1.5" stroke-linecap="round"/><path d="M0.4 12.6 L3.2 10.8" stroke="#4f86e0" stroke-width="1.5" stroke-linecap="round"/><path d="M0.4 17.6 L3.2 15.8" stroke="#4f86e0" stroke-width="1.5" stroke-linecap="round"/><path d="M0.4 22.6 L3.2 20.8" stroke="#4f86e0" stroke-width="1.5" stroke-linecap="round"/></svg>
<div style="position:absolute;left:565px;top:2px;width:821px;height:28px;background:linear-gradient(#fde6ae 0%,#ffd596 18%,#ffc27c 45%,#ffae5c 75%,#ffa24a 100%)"></div>
<div class="t" style="left:596.60px;top:5.90px;font-size:15px;line-height:21px;color:#1f3076;letter-spacing:-0.303px;">OFs (ALU):File d&#x27;attente des OFs disponibles de la ressource Fin de Fab Menuiseries ALU ( )</div>
<div style="position:absolute;left:565px;top:30px;width:821px;height:28px;background:#fff"></div>
<div style="position:absolute;left:565px;top:30px;width:821px;height:1px;background:#ffcf9e"></div>
<div style="position:absolute;left:565px;top:58px;width:821px;height:2.5px;background:#a9c6f0"></div>
<div style="position:absolute;left:565px;top:60px;width:821px;height:1px;background:#9aa6b8"></div>
<div style="position:absolute;left:565px;top:61px;width:821px;height:1px;background:#6a6a6a"></div>
<div class="t" style="left:603.40px;top:35.10px;font-size:15px;line-height:21px;color:#1f3f97;letter-spacing:-0.222px;">Gestion Commerciale ...</div>
<div class="t" style="left:803.50px;top:35.10px;font-size:15px;line-height:21px;color:#1f3f97;letter-spacing:-0.477px;">Histo. Déc.Fab. CTs : H...</div>
<div class="t" style="left:1003.30px;top:35.10px;font-size:15px;line-height:21px;color:#1f3f97;letter-spacing:-0.297px;">CTs (ALU):File d&#x27;attent...</div>
<div class="t" style="left:1203.30px;top:35.10px;font-size:15px;line-height:21px;color:#1f3f97;letter-spacing:-0.161px;">Histo. Déc. Coproduits...</div>
<div style="position:absolute;left:1372px;top:33px;width:20px;height:27px;background:#e9f0f9;border:1.5px solid #a8c8f2;border-bottom:none;border-radius:4px 4px 0 0;box-sizing:border-box"></div>
<svg style="position:absolute;left:573.5px;top:5px" width="22" height="24" viewBox="0 0 22 24" ><defs><radialGradient id="yg1" cx="0.38" cy="0.6" r="0.7"><stop offset="0" stop-color="#eef600"/><stop offset="0.55" stop-color="#c3cf08"/><stop offset="1" stop-color="#7f8e06"/></radialGradient></defs><ellipse cx="3.2" cy="15.4" rx="2.4" ry="0.9" fill="#8a6a3a" opacity="0.35"/><path d="M3.6 2.4 L10.4 5.2 M1.4 7 L7.4 12.6" stroke="#b7a684" stroke-width="0.9" opacity="0.8"/><circle cx="2.9" cy="5" r="2.7" fill="#cdd2d8" stroke="#b4bac2" stroke-width="0.6"/><path d="M11.02 13.53 L11.17 12.27 L12.83 12.27 L12.98 13.53 L13.61 13.76 L14.53 12.89 L15.81 13.96 L15.11 15.02 L15.44 15.59 L16.71 15.52 L17.00 17.17 L15.79 17.53 L15.67 18.18 L16.69 18.94 L15.85 20.39 L14.69 19.89 L14.18 20.31 L14.47 21.55 L12.90 22.12 L12.33 20.99 L11.67 20.99 L11.10 22.12 L9.53 21.55 L9.82 20.31 L9.31 19.89 L8.15 20.39 L7.31 18.94 L8.33 18.18 L8.21 17.53 L7.00 17.17 L7.29 15.52 L8.56 15.59 L8.89 15.02 L8.19 13.96 L9.47 12.89 L10.39 13.76Z M11.00 17.20 a1.00 1.00 0 1 0 2.00 0 a1.00 1.00 0 1 0 -2.00 0Z" fill="#a3ae12" fill-rule="evenodd" stroke="#8d9a0a" stroke-width="0.8" stroke-linejoin="round" opacity="0.92"/><circle cx="12" cy="10" r="5.7" fill="url(#yg1)"/><circle cx="12" cy="10" r="3.4" fill="none" stroke="#8c9a05" stroke-width="0.7" opacity="0.7"/><path d="M12 5 V15 M7 10 H17 M8.5 6.5 L15.5 13.5 M15.5 6.5 L8.5 13.5" stroke="#97a408" stroke-width="0.8" opacity="0.6"/><circle cx="11" cy="7.4" r="0.8" fill="#f4f3c0" opacity="0.9"/></svg>
<svg style="position:absolute;left:977.5px;top:33.5px" width="22" height="24" viewBox="0 0 22 24" ><defs><radialGradient id="yg2" cx="0.38" cy="0.6" r="0.7"><stop offset="0" stop-color="#eef600"/><stop offset="0.55" stop-color="#c3cf08"/><stop offset="1" stop-color="#7f8e06"/></radialGradient></defs><ellipse cx="3.2" cy="15.4" rx="2.4" ry="0.9" fill="#8a6a3a" opacity="0.35"/><path d="M3.6 2.4 L10.4 5.2 M1.4 7 L7.4 12.6" stroke="#b7a684" stroke-width="0.9" opacity="0.8"/><circle cx="2.9" cy="5" r="2.7" fill="#cdd2d8" stroke="#b4bac2" stroke-width="0.6"/><path d="M11.02 13.53 L11.17 12.27 L12.83 12.27 L12.98 13.53 L13.61 13.76 L14.53 12.89 L15.81 13.96 L15.11 15.02 L15.44 15.59 L16.71 15.52 L17.00 17.17 L15.79 17.53 L15.67 18.18 L16.69 18.94 L15.85 20.39 L14.69 19.89 L14.18 20.31 L14.47 21.55 L12.90 22.12 L12.33 20.99 L11.67 20.99 L11.10 22.12 L9.53 21.55 L9.82 20.31 L9.31 19.89 L8.15 20.39 L7.31 18.94 L8.33 18.18 L8.21 17.53 L7.00 17.17 L7.29 15.52 L8.56 15.59 L8.89 15.02 L8.19 13.96 L9.47 12.89 L10.39 13.76Z M11.00 17.20 a1.00 1.00 0 1 0 2.00 0 a1.00 1.00 0 1 0 -2.00 0Z" fill="#a3ae12" fill-rule="evenodd" stroke="#8d9a0a" stroke-width="0.8" stroke-linejoin="round" opacity="0.92"/><circle cx="12" cy="10" r="5.7" fill="url(#yg2)"/><circle cx="12" cy="10" r="3.4" fill="none" stroke="#8c9a05" stroke-width="0.7" opacity="0.7"/><path d="M12 5 V15 M7 10 H17 M8.5 6.5 L15.5 13.5 M15.5 6.5 L8.5 13.5" stroke="#97a408" stroke-width="0.8" opacity="0.6"/><circle cx="11" cy="7.4" r="0.8" fill="#f4f3c0" opacity="0.9"/></svg>
<svg style="position:absolute;left:1380.6px;top:34.5px" width="22" height="24" viewBox="0 0 22 24" ><defs><radialGradient id="yg3" cx="0.38" cy="0.6" r="0.7"><stop offset="0" stop-color="#eef600"/><stop offset="0.55" stop-color="#c3cf08"/><stop offset="1" stop-color="#7f8e06"/></radialGradient></defs><ellipse cx="3.2" cy="15.4" rx="2.4" ry="0.9" fill="#8a6a3a" opacity="0.35"/><path d="M3.6 2.4 L10.4 5.2 M1.4 7 L7.4 12.6" stroke="#b7a684" stroke-width="0.9" opacity="0.8"/><circle cx="2.9" cy="5" r="2.7" fill="#cdd2d8" stroke="#b4bac2" stroke-width="0.6"/><path d="M11.02 13.53 L11.17 12.27 L12.83 12.27 L12.98 13.53 L13.61 13.76 L14.53 12.89 L15.81 13.96 L15.11 15.02 L15.44 15.59 L16.71 15.52 L17.00 17.17 L15.79 17.53 L15.67 18.18 L16.69 18.94 L15.85 20.39 L14.69 19.89 L14.18 20.31 L14.47 21.55 L12.90 22.12 L12.33 20.99 L11.67 20.99 L11.10 22.12 L9.53 21.55 L9.82 20.31 L9.31 19.89 L8.15 20.39 L7.31 18.94 L8.33 18.18 L8.21 17.53 L7.00 17.17 L7.29 15.52 L8.56 15.59 L8.89 15.02 L8.19 13.96 L9.47 12.89 L10.39 13.76Z M11.00 17.20 a1.00 1.00 0 1 0 2.00 0 a1.00 1.00 0 1 0 -2.00 0Z" fill="#a3ae12" fill-rule="evenodd" stroke="#8d9a0a" stroke-width="0.8" stroke-linejoin="round" opacity="0.92"/><circle cx="12" cy="10" r="5.7" fill="url(#yg3)"/><circle cx="12" cy="10" r="3.4" fill="none" stroke="#8c9a05" stroke-width="0.7" opacity="0.7"/><path d="M12 5 V15 M7 10 H17 M8.5 6.5 L15.5 13.5 M15.5 6.5 L8.5 13.5" stroke="#97a408" stroke-width="0.8" opacity="0.6"/><circle cx="11" cy="7.4" r="0.8" fill="#f4f3c0" opacity="0.9"/></svg>
<svg style="position:absolute;left:579px;top:35.5px" width="20.5" height="20" viewBox="0 0 20.5 20" ><path d="M5.6 3.4 q0.2 -2.6 2.6 -2.8 l3.2 -0.3 q2.2 0 2.4 2" fill="none" stroke="#2b3648" stroke-width="1.7"/><path d="M0.3 5.4 L15 2.4 L15 19.6 L0.3 16.6z" fill="#3a4a64"/><path d="M15 2.4 L19.6 1.6 L19.6 17.6 L15 19.6z" fill="#2a3648"/><path d="M0.3 5.4 L15 2.4 L15 10.2 Q7.6 13.4 0.3 11.2z" fill="#485975"/><rect x="3.8" y="8.2" width="1.5" height="5.6" fill="#141a24"/><rect x="10.4" y="7.6" width="1.6" height="6.6" fill="#141a24"/><rect x="3.8" y="8.8" width="1.5" height="1.4" fill="#c9a93c"/><rect x="10.4" y="8.2" width="1.6" height="1.4" fill="#c9a93c"/></svg>
<svg style="position:absolute;left:781.5px;top:38.5px" width="15" height="15" viewBox="0 0 15 15" ><path d="M3.2 4.2 A5.6 5.6 0 1 1 2.4 10.6" fill="none" stroke="#2aa7b5" stroke-width="2.3"/><path d="M0.4 1.6 L5.6 2 L2.4 6.4z" fill="#2aa7b5"/><path d="M7.6 4.8 L7.6 8 L5.4 9.4" fill="none" stroke="#2aa7b5" stroke-width="1.5"/></svg>
<svg style="position:absolute;left:1181.5px;top:38.5px" width="15" height="15" viewBox="0 0 15 15" ><path d="M3.2 4.2 A5.6 5.6 0 1 1 2.4 10.6" fill="none" stroke="#2aa7b5" stroke-width="2.3"/><path d="M0.4 1.6 L5.6 2 L2.4 6.4z" fill="#2aa7b5"/><path d="M7.6 4.8 L7.6 8 L5.4 9.4" fill="none" stroke="#2aa7b5" stroke-width="1.5"/></svg>
<div style="position:absolute;left:565px;top:61px;width:1px;height:643px;background:#6a6a6a"></div>
<div style="position:absolute;left:565px;top:703.5px;width:592px;height:1px;background:#a8aeb8"></div>
<div style="position:absolute;left:566px;top:62px;width:41px;height:22px;background:#a9c4e9;box-sizing:border-box;border-right:1px solid #9cb8de;border-bottom:1px solid #9cb8de;border-top:1px solid #c3d6f0;border-left:1px solid #c3d6f0"></div>
<svg style="position:absolute;left:590px;top:68px" width="12" height="12" viewBox="0 0 12 12" ><path d="M11.2 0.9 L11.2 11.7 L1 11.7z" fill="#e2eaf6"/></svg>
<div style="position:absolute;left:607px;top:62px;width:132px;height:22px;background:linear-gradient(#f9d99e 0%,#f7cf86 50%,#f3c571 100%);box-sizing:border-box;border-right:1px solid #e9b76e;border-bottom:1.5px solid #f29536;border-left:1px solid #f2a64e"></div>
<div style="position:absolute;left:739px;top:62px;width:61px;height:22px;background:linear-gradient(#f8fafd 0%,#e9f0f9 40%,#d3dff0 100%);box-sizing:border-box;border-right:1px solid #9ebde4;border-bottom:1.5px solid #9ebde4;border-left:1px solid #fff"></div>
<div style="position:absolute;left:800px;top:62px;width:51px;height:22px;background:linear-gradient(#f8fafd 0%,#e9f0f9 40%,#d3dff0 100%);box-sizing:border-box;border-right:1px solid #9ebde4;border-bottom:1.5px solid #9ebde4;border-left:1px solid #fff"></div>
<div style="position:absolute;left:851px;top:62px;width:61px;height:22px;background:linear-gradient(#f8fafd 0%,#e9f0f9 40%,#d3dff0 100%);box-sizing:border-box;border-right:1px solid #9ebde4;border-bottom:1.5px solid #9ebde4;border-left:1px solid #fff"></div>
<div style="position:absolute;left:912px;top:62px;width:62px;height:22px;background:linear-gradient(#f8fafd 0%,#e9f0f9 40%,#d3dff0 100%);box-sizing:border-box;border-right:1px solid #9ebde4;border-bottom:1.5px solid #9ebde4;border-left:1px solid #fff"></div>
<div style="position:absolute;left:974px;top:62px;width:41px;height:22px;background:linear-gradient(#f8fafd 0%,#e9f0f9 40%,#d3dff0 100%);box-sizing:border-box;border-right:1px solid #9ebde4;border-bottom:1.5px solid #9ebde4;border-left:1px solid #fff"></div>
<div style="position:absolute;left:1015px;top:62px;width:51px;height:22px;background:linear-gradient(#f8fafd 0%,#e9f0f9 40%,#d3dff0 100%);box-sizing:border-box;border-right:1px solid #9ebde4;border-bottom:1.5px solid #9ebde4;border-left:1px solid #fff"></div>
<div style="position:absolute;left:1066px;top:62px;width:91px;height:22px;background:linear-gradient(#f8fafd 0%,#e9f0f9 40%,#d3dff0 100%);box-sizing:border-box;border-right:1px solid #9ebde4;border-bottom:1.5px solid #9ebde4;border-left:1px solid #fff"></div>
<div class="t" style="left:663.90px;top:62.40px;font-size:15.6px;line-height:22px;color:#1c1c1c;transform:scaleX(0.8127);transform-origin:0 0;">OF</div>
<div class="t" style="left:752.00px;top:62.40px;font-size:15.6px;line-height:22px;color:#1c1c1c;transform:scaleX(0.8438);transform-origin:0 0;">Etape</div>
<div class="t" style="left:806.40px;top:62.40px;font-size:15.6px;line-height:22px;color:#1c1c1c;transform:scaleX(0.8506);transform-origin:0 0;">Dispo.</div>
<div class="t" style="left:863.00px;top:62.40px;font-size:15.6px;line-height:22px;color:#1c1c1c;transform:scaleX(0.8565);transform-origin:0 0;">Lancé</div>
<div class="t" style="left:925.40px;top:62.40px;font-size:15.6px;line-height:22px;color:#1c1c1c;transform:scaleX(0.8491);transform-origin:0 0;">Reste</div>
<div class="t" style="left:983.90px;top:62.40px;font-size:15.6px;line-height:22px;color:#1c1c1c;transform:scaleX(0.8484);transform-origin:0 0;">R.L</div>
<div class="t" style="left:1025.90px;top:62.40px;font-size:15.6px;line-height:22px;color:#1c1c1c;transform:scaleX(0.8252);transform-origin:0 0;">UME</div>
<div class="t" style="left:1086.30px;top:62.40px;font-size:15.6px;line-height:22px;color:#1c1c1c;transform:scaleX(0.8450);transform-origin:0 0;">Date Fin</div>
<div style="position:absolute;left:566px;top:84px;width:41px;height:20px;background:#e4ecf7;box-sizing:border-box;border-bottom:1px solid #a3bbd9;border-right:1px solid #a9bfd9;border-top:1px solid #c3d2e6"></div>
<div style="position:absolute;left:607px;top:84px;width:549px;height:20px;background:#ffffff;box-sizing:border-box;border-bottom:1px dotted #c6c6c6"></div>
<div style="position:absolute;left:566px;top:104px;width:41px;height:20px;background:#e4ecf7;box-sizing:border-box;border-bottom:1px solid #a3bbd9;border-right:1px solid #a9bfd9;border-top:1px solid #c3d2e6"></div>
<div style="position:absolute;left:607px;top:104px;width:549px;height:20px;background:#f0f0f0;box-sizing:border-box;border-bottom:1px dotted #c6c6c6"></div>
<div style="position:absolute;left:566px;top:124px;width:41px;height:20px;background:#e4ecf7;box-sizing:border-box;border-bottom:1px solid #a3bbd9;border-right:1px solid #a9bfd9;border-top:1px solid #c3d2e6"></div>
<div style="position:absolute;left:607px;top:124px;width:549px;height:20px;background:#ffffff;box-sizing:border-box;border-bottom:1px dotted #c6c6c6"></div>
<div style="position:absolute;left:566px;top:144px;width:41px;height:20px;background:#e4ecf7;box-sizing:border-box;border-bottom:1px solid #a3bbd9;border-right:1px solid #a9bfd9;border-top:1px solid #c3d2e6"></div>
<div style="position:absolute;left:607px;top:144px;width:549px;height:20px;background:#f0f0f0;box-sizing:border-box;border-bottom:1px dotted #c6c6c6"></div>
<div style="position:absolute;left:566px;top:164px;width:41px;height:20px;background:#e4ecf7;box-sizing:border-box;border-bottom:1px solid #a3bbd9;border-right:1px solid #a9bfd9;border-top:1px solid #c3d2e6"></div>
<div style="position:absolute;left:607px;top:164px;width:549px;height:20px;background:#ffffff;box-sizing:border-box;border-bottom:1px dotted #c6c6c6"></div>
<div style="position:absolute;left:566px;top:184px;width:41px;height:20px;background:#e4ecf7;box-sizing:border-box;border-bottom:1px solid #a3bbd9;border-right:1px solid #a9bfd9;border-top:1px solid #c3d2e6"></div>
<div style="position:absolute;left:607px;top:184px;width:549px;height:20px;background:#f0f0f0;box-sizing:border-box;border-bottom:1px dotted #c6c6c6"></div>
<div style="position:absolute;left:566px;top:204px;width:41px;height:20px;background:#e4ecf7;box-sizing:border-box;border-bottom:1px solid #a3bbd9;border-right:1px solid #a9bfd9;border-top:1px solid #c3d2e6"></div>
<div style="position:absolute;left:607px;top:204px;width:549px;height:20px;background:#ffffff;box-sizing:border-box;border-bottom:1px dotted #c6c6c6"></div>
<div style="position:absolute;left:566px;top:223px;width:41px;height:21px;background:#fbc87c;box-sizing:border-box;border-top:1.5px solid #f4a043;border-bottom:1.5px solid #f4a043;border-right:1px solid #f4a043"></div>
<div style="position:absolute;left:607px;top:224px;width:549px;height:20px;background:#f0f0f0;box-sizing:border-box;border-bottom:1px dotted #c6c6c6"></div>
<div style="position:absolute;left:566px;top:244px;width:41px;height:20px;background:#e4ecf7;box-sizing:border-box;border-bottom:1px solid #a3bbd9;border-right:1px solid #a9bfd9;border-top:1px solid #c3d2e6"></div>
<div style="position:absolute;left:607px;top:244px;width:549px;height:20px;background:#ffffff;box-sizing:border-box;border-bottom:1px dotted #c6c6c6"></div>
<div style="position:absolute;left:566px;top:264px;width:41px;height:20px;background:#e4ecf7;box-sizing:border-box;border-bottom:1px solid #a3bbd9;border-right:1px solid #a9bfd9;border-top:1px solid #c3d2e6"></div>
<div style="position:absolute;left:607px;top:264px;width:549px;height:20px;background:#f0f0f0;box-sizing:border-box;border-bottom:1px dotted #c6c6c6"></div>
<div style="position:absolute;left:566px;top:284px;width:41px;height:20px;background:#e4ecf7;box-sizing:border-box;border-bottom:1px solid #a3bbd9;border-right:1px solid #a9bfd9;border-top:1px solid #c3d2e6"></div>
<div style="position:absolute;left:607px;top:284px;width:549px;height:20px;background:#ffffff;box-sizing:border-box;border-bottom:1px dotted #c6c6c6"></div>
<div style="position:absolute;left:566px;top:304px;width:41px;height:20px;background:#e4ecf7;box-sizing:border-box;border-bottom:1px solid #a3bbd9;border-right:1px solid #a9bfd9;border-top:1px solid #c3d2e6"></div>
<div style="position:absolute;left:607px;top:304px;width:549px;height:20px;background:#f0f0f0;box-sizing:border-box;border-bottom:1px dotted #c6c6c6"></div>
<div style="position:absolute;left:566px;top:324px;width:41px;height:20px;background:#e4ecf7;box-sizing:border-box;border-bottom:1px solid #a3bbd9;border-right:1px solid #a9bfd9;border-top:1px solid #c3d2e6"></div>
<div style="position:absolute;left:607px;top:324px;width:549px;height:20px;background:#ffffff;box-sizing:border-box;border-bottom:1px dotted #c6c6c6"></div>
<div style="position:absolute;left:566px;top:344px;width:41px;height:20px;background:#e4ecf7;box-sizing:border-box;border-bottom:1px solid #a3bbd9;border-right:1px solid #a9bfd9;border-top:1px solid #c3d2e6"></div>
<div style="position:absolute;left:607px;top:344px;width:549px;height:20px;background:#f0f0f0;box-sizing:border-box;border-bottom:1px dotted #c6c6c6"></div>
<div style="position:absolute;left:566px;top:364px;width:41px;height:20px;background:#e4ecf7;box-sizing:border-box;border-bottom:1px solid #a3bbd9;border-right:1px solid #a9bfd9;border-top:1px solid #c3d2e6"></div>
<div style="position:absolute;left:607px;top:364px;width:549px;height:20px;background:#ffffff;box-sizing:border-box;border-bottom:1px dotted #c6c6c6"></div>
<div style="position:absolute;left:566px;top:384px;width:41px;height:20px;background:#e4ecf7;box-sizing:border-box;border-bottom:1px solid #a3bbd9;border-right:1px solid #a9bfd9;border-top:1px solid #c3d2e6"></div>
<div style="position:absolute;left:607px;top:384px;width:549px;height:20px;background:#f0f0f0;box-sizing:border-box;border-bottom:1px dotted #c6c6c6"></div>
<div style="position:absolute;left:566px;top:404px;width:41px;height:20px;background:#e4ecf7;box-sizing:border-box;border-bottom:1px solid #a3bbd9;border-right:1px solid #a9bfd9;border-top:1px solid #c3d2e6"></div>
<div style="position:absolute;left:607px;top:404px;width:549px;height:20px;background:#ffffff;box-sizing:border-box;border-bottom:1px dotted #c6c6c6"></div>
<div style="position:absolute;left:566px;top:424px;width:41px;height:20px;background:#e4ecf7;box-sizing:border-box;border-bottom:1px solid #a3bbd9;border-right:1px solid #a9bfd9;border-top:1px solid #c3d2e6"></div>
<div style="position:absolute;left:607px;top:424px;width:549px;height:20px;background:#f0f0f0;box-sizing:border-box;border-bottom:1px dotted #c6c6c6"></div>
<div style="position:absolute;left:566px;top:444px;width:41px;height:20px;background:#e4ecf7;box-sizing:border-box;border-bottom:1px solid #a3bbd9;border-right:1px solid #a9bfd9;border-top:1px solid #c3d2e6"></div>
<div style="position:absolute;left:607px;top:444px;width:549px;height:20px;background:#ffffff;box-sizing:border-box;border-bottom:1px dotted #c6c6c6"></div>
<div style="position:absolute;left:566px;top:464px;width:41px;height:20px;background:#e4ecf7;box-sizing:border-box;border-bottom:1px solid #a3bbd9;border-right:1px solid #a9bfd9;border-top:1px solid #c3d2e6"></div>
<div style="position:absolute;left:607px;top:464px;width:549px;height:20px;background:#f0f0f0;box-sizing:border-box;border-bottom:1px dotted #c6c6c6"></div>
<div style="position:absolute;left:566px;top:484px;width:41px;height:20px;background:#e4ecf7;box-sizing:border-box;border-bottom:1px solid #a3bbd9;border-right:1px solid #a9bfd9;border-top:1px solid #c3d2e6"></div>
<div style="position:absolute;left:607px;top:484px;width:549px;height:20px;background:#ffffff;box-sizing:border-box;border-bottom:1px dotted #c6c6c6"></div>
<div style="position:absolute;left:566px;top:504px;width:41px;height:20px;background:#e4ecf7;box-sizing:border-box;border-bottom:1px solid #a3bbd9;border-right:1px solid #a9bfd9;border-top:1px solid #c3d2e6"></div>
<div style="position:absolute;left:607px;top:504px;width:549px;height:20px;background:#f0f0f0;box-sizing:border-box;border-bottom:1px dotted #c6c6c6"></div>
<div style="position:absolute;left:566px;top:524px;width:41px;height:20px;background:#e4ecf7;box-sizing:border-box;border-bottom:1px solid #a3bbd9;border-right:1px solid #a9bfd9;border-top:1px solid #c3d2e6"></div>
<div style="position:absolute;left:607px;top:524px;width:549px;height:20px;background:#ffffff;box-sizing:border-box;border-bottom:1px dotted #c6c6c6"></div>
<div style="position:absolute;left:566px;top:544px;width:41px;height:20px;background:#e4ecf7;box-sizing:border-box;border-bottom:1px solid #a3bbd9;border-right:1px solid #a9bfd9;border-top:1px solid #c3d2e6"></div>
<div style="position:absolute;left:607px;top:544px;width:549px;height:20px;background:#f0f0f0;box-sizing:border-box;border-bottom:1px dotted #c6c6c6"></div>
<div style="position:absolute;left:566px;top:564px;width:41px;height:20px;background:#e4ecf7;box-sizing:border-box;border-bottom:1px solid #a3bbd9;border-right:1px solid #a9bfd9;border-top:1px solid #c3d2e6"></div>
<div style="position:absolute;left:607px;top:564px;width:549px;height:20px;background:#ffffff;box-sizing:border-box;border-bottom:1px dotted #c6c6c6"></div>
<div style="position:absolute;left:566px;top:584px;width:41px;height:20px;background:#e4ecf7;box-sizing:border-box;border-bottom:1px solid #a3bbd9;border-right:1px solid #a9bfd9;border-top:1px solid #c3d2e6"></div>
<div style="position:absolute;left:607px;top:584px;width:549px;height:20px;background:#f0f0f0;box-sizing:border-box;border-bottom:1px dotted #c6c6c6"></div>
<div style="position:absolute;left:566px;top:604px;width:41px;height:20px;background:#e4ecf7;box-sizing:border-box;border-bottom:1px solid #a3bbd9;border-right:1px solid #a9bfd9;border-top:1px solid #c3d2e6"></div>
<div style="position:absolute;left:607px;top:604px;width:549px;height:20px;background:#ffffff;box-sizing:border-box;border-bottom:1px dotted #c6c6c6"></div>
<div style="position:absolute;left:566px;top:624px;width:41px;height:20px;background:#e4ecf7;box-sizing:border-box;border-bottom:1px solid #a3bbd9;border-right:1px solid #a9bfd9;border-top:1px solid #c3d2e6"></div>
<div style="position:absolute;left:607px;top:624px;width:549px;height:20px;background:#f0f0f0;box-sizing:border-box;border-bottom:1px dotted #c6c6c6"></div>
<div style="position:absolute;left:566px;top:644px;width:41px;height:20px;background:#e4ecf7;box-sizing:border-box;border-bottom:1px solid #a3bbd9;border-right:1px solid #a9bfd9;border-top:1px solid #c3d2e6"></div>
<div style="position:absolute;left:607px;top:644px;width:549px;height:20px;background:#ffffff;box-sizing:border-box;border-bottom:1px dotted #c6c6c6"></div>
<div style="position:absolute;left:566px;top:664px;width:41px;height:20px;background:#e4ecf7;box-sizing:border-box;border-bottom:1px solid #a3bbd9;border-right:1px solid #a9bfd9;border-top:1px solid #c3d2e6"></div>
<div style="position:absolute;left:607px;top:664px;width:549px;height:20px;background:#f0f0f0;box-sizing:border-box;border-bottom:1px dotted #c6c6c6"></div>
<div style="position:absolute;left:566px;top:684px;width:41px;height:20px;background:#e4ecf7;box-sizing:border-box;border-bottom:1px solid #a3bbd9;border-right:1px solid #a9bfd9;border-top:1px solid #c3d2e6"></div>
<div style="position:absolute;left:607px;top:684px;width:549px;height:20px;background:#ffffff;box-sizing:border-box;border-bottom:1px dotted #c6c6c6"></div>
<div style="position:absolute;left:738px;top:84px;width:0;height:620px;border-left:1px dotted #cacaca"></div>
<div style="position:absolute;left:799px;top:84px;width:0;height:620px;border-left:1px dotted #cacaca"></div>
<div style="position:absolute;left:850px;top:84px;width:0;height:620px;border-left:1px dotted #cacaca"></div>
<div style="position:absolute;left:911px;top:84px;width:0;height:620px;border-left:1px dotted #cacaca"></div>
<div style="position:absolute;left:973px;top:84px;width:0;height:620px;border-left:1px dotted #cacaca"></div>
<div style="position:absolute;left:1014px;top:84px;width:0;height:620px;border-left:1px dotted #cacaca"></div>
<div style="position:absolute;left:1065px;top:84px;width:0;height:620px;border-left:1px dotted #cacaca"></div>
<div style="position:absolute;left:1156px;top:84px;width:1.5px;height:619.5px;background:#c3c3c3"></div>
<div class="t" style="left:1075.60px;top:83.60px;font-size:15.6px;line-height:22px;color:#1c1c1c;transform:scaleX(0.9276);transform-origin:0 0;">01/02/2023</div>
<div class="t" style="left:609.60px;top:83.60px;font-size:15.6px;line-height:22px;color:#1c1c1c;transform:scaleX(0.8562);transform-origin:0 0;">A21300001001</div>
<div class="t" style="left:741.00px;top:83.60px;font-size:15.6px;line-height:22px;color:#1c1c1c;transform:scaleX(0.8700);transform-origin:0 0;">ALU</div>
<div class="t" style="left:876.00px;top:83.60px;font-size:15.6px;line-height:22px;color:#1c1c1c;transform:scaleX(0.8404);transform-origin:0 0;">1,000</div>
<div class="t" style="left:937.00px;top:83.60px;font-size:15.6px;line-height:22px;color:#1c1c1c;transform:scaleX(0.8506);transform-origin:0 0;">1,000</div>
<div style="position:absolute;left:816.2px;top:86.2px;width:16.2px;height:15.6px;background:#fff;border:1.6px solid #555;box-sizing:border-box"></div>
<svg style="position:absolute;left:818px;top:88.0px" width="13" height="12" viewBox="0 0 13 12" ><path d="M2 5.6 L5 8.8 L11 2.4" fill="none" stroke="#3c3c3c" stroke-width="1.4"/></svg>
<div class="t" style="left:1075.60px;top:103.60px;font-size:15.6px;line-height:22px;color:#1c1c1c;transform:scaleX(0.9276);transform-origin:0 0;">17/08/2023</div>
<div class="t" style="left:609.60px;top:103.60px;font-size:15.6px;line-height:22px;color:#1c1c1c;transform:scaleX(0.8469);transform-origin:0 0;">23340001001</div>
<div class="t" style="left:741.00px;top:103.60px;font-size:15.6px;line-height:22px;color:#1c1c1c;transform:scaleX(0.8513);transform-origin:0 0;">DEBUT</div>
<div class="t" style="left:876.00px;top:103.60px;font-size:15.6px;line-height:22px;color:#1c1c1c;transform:scaleX(0.8404);transform-origin:0 0;">1,000</div>
<div class="t" style="left:937.00px;top:103.60px;font-size:15.6px;line-height:22px;color:#1c1c1c;transform:scaleX(0.8506);transform-origin:0 0;">1,000</div>
<div style="position:absolute;left:974px;top:104px;width:40.4px;height:19px;overflow:hidden;font-size:15.6px;line-height:22px;color:#1c1c1c;white-space:pre"><span style="position:absolute;left:2.8px;top:-0.4px;transform:scaleX(0.86);transform-origin:0 0;letter-spacing:0.15px">TESTI</span></div>
<div style="position:absolute;left:816.2px;top:106.2px;width:16.2px;height:15.6px;background:#fff;border:1.6px solid #555;box-sizing:border-box"></div>
<svg style="position:absolute;left:818px;top:108.0px" width="13" height="12" viewBox="0 0 13 12" ><path d="M2 5.6 L5 8.8 L11 2.4" fill="none" stroke="#3c3c3c" stroke-width="1.4"/></svg>
<div class="t" style="left:1075.60px;top:123.60px;font-size:15.6px;line-height:22px;color:#1c1c1c;transform:scaleX(0.9276);transform-origin:0 0;">17/08/2023</div>
<div class="t" style="left:609.60px;top:123.60px;font-size:15.6px;line-height:22px;color:#1c1c1c;transform:scaleX(0.8469);transform-origin:0 0;">23340002001</div>
<div class="t" style="left:741.00px;top:123.60px;font-size:15.6px;line-height:22px;color:#1c1c1c;transform:scaleX(0.8513);transform-origin:0 0;">DEBUT</div>
<div class="t" style="left:876.00px;top:123.60px;font-size:15.6px;line-height:22px;color:#1c1c1c;transform:scaleX(0.8404);transform-origin:0 0;">1,000</div>
<div class="t" style="left:937.00px;top:123.60px;font-size:15.6px;line-height:22px;color:#1c1c1c;transform:scaleX(0.8506);transform-origin:0 0;">1,000</div>
<div style="position:absolute;left:974px;top:124px;width:40.4px;height:19px;overflow:hidden;font-size:15.6px;line-height:22px;color:#1c1c1c;white-space:pre"><span style="position:absolute;left:2.8px;top:-0.4px;transform:scaleX(0.83);transform-origin:0 0;letter-spacing:0.15px">LOTBI</span></div>
<div style="position:absolute;left:816.2px;top:126.2px;width:16.2px;height:15.6px;background:#fff;border:1.6px solid #555;box-sizing:border-box"></div>
<svg style="position:absolute;left:818px;top:128.0px" width="13" height="12" viewBox="0 0 13 12" ><path d="M2 5.6 L5 8.8 L11 2.4" fill="none" stroke="#3c3c3c" stroke-width="1.4"/></svg>
<div class="t" style="left:1075.60px;top:143.60px;font-size:15.6px;line-height:22px;color:#1c1c1c;transform:scaleX(0.9276);transform-origin:0 0;">17/08/2023</div>
<div class="t" style="left:609.60px;top:143.60px;font-size:15.6px;line-height:22px;color:#1c1c1c;transform:scaleX(0.8469);transform-origin:0 0;">23340003001</div>
<div class="t" style="left:741.00px;top:143.60px;font-size:15.6px;line-height:22px;color:#1c1c1c;transform:scaleX(0.8513);transform-origin:0 0;">DEBUT</div>
<div class="t" style="left:876.00px;top:143.60px;font-size:15.6px;line-height:22px;color:#1c1c1c;transform:scaleX(0.8404);transform-origin:0 0;">1,000</div>
<div class="t" style="left:937.00px;top:143.60px;font-size:15.6px;line-height:22px;color:#1c1c1c;transform:scaleX(0.8506);transform-origin:0 0;">1,000</div>
<div style="position:absolute;left:816.2px;top:146.2px;width:16.2px;height:15.6px;background:#fff;border:1.6px solid #555;box-sizing:border-box"></div>
<svg style="position:absolute;left:818px;top:148.0px" width="13" height="12" viewBox="0 0 13 12" ><path d="M2 5.6 L5 8.8 L11 2.4" fill="none" stroke="#3c3c3c" stroke-width="1.4"/></svg>
<div class="t" style="left:1075.60px;top:163.60px;font-size:15.6px;line-height:22px;color:#1c1c1c;transform:scaleX(0.9276);transform-origin:0 0;">18/08/2023</div>
<div class="t" style="left:609.60px;top:163.60px;font-size:15.6px;line-height:22px;color:#1c1c1c;transform:scaleX(0.8562);transform-origin:0 0;">A21300002001</div>
<div style="position:absolute;left:816.2px;top:166.2px;width:16.2px;height:15.6px;background:#fff;border:1.6px solid #555;box-sizing:border-box"></div>
<svg style="position:absolute;left:818px;top:168.0px" width="13" height="12" viewBox="0 0 13 12" ><path d="M2 5.6 L5 8.8 L11 2.4" fill="none" stroke="#3c3c3c" stroke-width="1.4"/></svg>
<div class="t" style="left:1075.60px;top:183.60px;font-size:15.6px;line-height:22px;color:#1c1c1c;transform:scaleX(0.9276);transform-origin:0 0;">22/08/2023</div>
<div class="t" style="left:609.60px;top:183.60px;font-size:15.6px;line-height:22px;color:#1c1c1c;transform:scaleX(0.8469);transform-origin:0 0;">23340004001</div>
<div style="position:absolute;left:974px;top:184px;width:40.4px;height:19px;overflow:hidden;font-size:15.6px;line-height:22px;color:#1c1c1c;white-space:pre"><span style="position:absolute;left:2.8px;top:-0.4px;transform:scaleX(0.86);transform-origin:0 0;letter-spacing:0.15px">TESTI</span></div>
<div class="t" style="left:1075.60px;top:203.60px;font-size:15.6px;line-height:22px;color:#1c1c1c;transform:scaleX(0.9276);transform-origin:0 0;">22/08/2023</div>
<div class="t" style="left:609.60px;top:203.60px;font-size:15.6px;line-height:22px;color:#1c1c1c;transform:scaleX(0.8469);transform-origin:0 0;">23340004001</div>
<div style="position:absolute;left:974px;top:204px;width:40.4px;height:19px;overflow:hidden;font-size:15.6px;line-height:22px;color:#1c1c1c;white-space:pre"><span style="position:absolute;left:2.8px;top:-0.4px;transform:scaleX(0.83);transform-origin:0 0;letter-spacing:0.15px">LOTBI</span></div>
<div class="t" style="left:1075.60px;top:223.60px;font-size:15.6px;line-height:22px;color:#0000ff;transform:scaleX(0.9276);transform-origin:0 0;">22/08/2023</div>
<div class="t" style="left:609.60px;top:223.60px;font-size:15.6px;line-height:22px;color:#0000ff;transform:scaleX(0.8469);transform-origin:0 0;">23340004001</div>
<div class="t" style="left:1075.60px;top:243.60px;font-size:15.6px;line-height:22px;color:#1c1c1c;transform:scaleX(0.9276);transform-origin:0 0;">22/08/2023</div>
<div class="t" style="left:609.60px;top:243.60px;font-size:15.6px;line-height:22px;color:#1c1c1c;transform:scaleX(0.8469);transform-origin:0 0;">23340004001</div>
<div class="t" style="left:1075.60px;top:263.60px;font-size:15.6px;line-height:22px;color:#1c1c1c;transform:scaleX(0.9276);transform-origin:0 0;">22/08/2023</div>
<div class="t" style="left:609.60px;top:263.60px;font-size:15.6px;line-height:22px;color:#1c1c1c;transform:scaleX(0.8469);transform-origin:0 0;">23340004001</div>
<div class="t" style="left:1075.60px;top:283.60px;font-size:15.6px;line-height:22px;color:#1c1c1c;transform:scaleX(0.9276);transform-origin:0 0;">22/08/2023</div>
<div class="t" style="left:609.60px;top:283.60px;font-size:15.6px;line-height:22px;color:#1c1c1c;transform:scaleX(0.8469);transform-origin:0 0;">23340004001</div>
<div class="t" style="left:1075.60px;top:303.60px;font-size:15.6px;line-height:22px;color:#1c1c1c;transform:scaleX(0.9276);transform-origin:0 0;">22/08/2023</div>
<div class="t" style="left:609.60px;top:303.60px;font-size:15.6px;line-height:22px;color:#1c1c1c;transform:scaleX(0.8500);transform-origin:0 0;">T</div>
<div class="t" style="left:1075.60px;top:323.60px;font-size:15.6px;line-height:22px;color:#1c1c1c;transform:scaleX(0.9276);transform-origin:0 0;">23/08/2023</div>
<div class="t" style="left:609.60px;top:323.60px;font-size:15.6px;line-height:22px;color:#1c1c1c;transform:scaleX(0.8469);transform-origin:0 0;">23340004001</div>
<div class="t" style="left:1075.60px;top:343.60px;font-size:15.6px;line-height:22px;color:#1c1c1c;transform:scaleX(0.9276);transform-origin:0 0;">23/08/2023</div>
<div class="t" style="left:609.60px;top:343.60px;font-size:15.6px;line-height:22px;color:#1c1c1c;transform:scaleX(0.8469);transform-origin:0 0;">23340004001</div>
<div class="t" style="left:1075.60px;top:363.60px;font-size:15.6px;line-height:22px;color:#1c1c1c;transform:scaleX(0.9276);transform-origin:0 0;">23/08/2023</div>
<div class="t" style="left:609.60px;top:363.60px;font-size:15.6px;line-height:22px;color:#1c1c1c;transform:scaleX(0.8469);transform-origin:0 0;">23340004001</div>
<div class="t" style="left:1075.60px;top:383.60px;font-size:15.6px;line-height:22px;color:#1c1c1c;transform:scaleX(0.9276);transform-origin:0 0;">23/08/2023</div>
<div class="t" style="left:609.60px;top:383.60px;font-size:15.6px;line-height:22px;color:#1c1c1c;transform:scaleX(0.8500);transform-origin:0 0;">T</div>
<div class="t" style="left:1075.60px;top:403.60px;font-size:15.6px;line-height:22px;color:#1c1c1c;transform:scaleX(0.9276);transform-origin:0 0;">23/08/2023</div>
<div class="t" style="left:609.60px;top:403.60px;font-size:15.6px;line-height:22px;color:#1c1c1c;transform:scaleX(0.8500);transform-origin:0 0;">T</div>
<div class="t" style="left:1075.60px;top:423.60px;font-size:15.6px;line-height:22px;color:#1c1c1c;transform:scaleX(0.9276);transform-origin:0 0;">24/08/2023</div>
<div class="t" style="left:609.60px;top:423.60px;font-size:15.6px;line-height:22px;color:#1c1c1c;transform:scaleX(0.8500);transform-origin:0 0;">T</div>
<div class="t" style="left:1075.60px;top:443.60px;font-size:15.6px;line-height:22px;color:#1c1c1c;transform:scaleX(0.9276);transform-origin:0 0;">25/08/2023</div>
<div class="t" style="left:609.60px;top:443.60px;font-size:15.6px;line-height:22px;color:#1c1c1c;transform:scaleX(0.8469);transform-origin:0 0;">23340004001</div>
<div class="t" style="left:1075.60px;top:463.60px;font-size:15.6px;line-height:22px;color:#1c1c1c;transform:scaleX(0.9276);transform-origin:0 0;">25/08/2023</div>
<div class="t" style="left:609.60px;top:463.60px;font-size:15.6px;line-height:22px;color:#1c1c1c;transform:scaleX(0.8469);transform-origin:0 0;">23340004001</div>
<div class="t" style="left:1075.60px;top:483.60px;font-size:15.6px;line-height:22px;color:#1c1c1c;transform:scaleX(0.9276);transform-origin:0 0;">25/08/2023</div>
<div class="t" style="left:609.60px;top:483.60px;font-size:15.6px;line-height:22px;color:#1c1c1c;transform:scaleX(0.8500);transform-origin:0 0;">T</div>
<div class="t" style="left:1075.60px;top:503.60px;font-size:15.6px;line-height:22px;color:#1c1c1c;transform:scaleX(0.9276);transform-origin:0 0;">28/08/2023</div>
<div class="t" style="left:609.60px;top:503.60px;font-size:15.6px;line-height:22px;color:#1c1c1c;transform:scaleX(0.8469);transform-origin:0 0;">23340004001</div>
<div class="t" style="left:1075.60px;top:523.60px;font-size:15.6px;line-height:22px;color:#1c1c1c;transform:scaleX(0.9276);transform-origin:0 0;">28/08/2023</div>
<div class="t" style="left:609.60px;top:523.60px;font-size:15.6px;line-height:22px;color:#1c1c1c;transform:scaleX(0.8469);transform-origin:0 0;">23340004001</div>
<div class="t" style="left:1075.60px;top:543.60px;font-size:15.6px;line-height:22px;color:#1c1c1c;transform:scaleX(0.9276);transform-origin:0 0;">29/08/2023</div>
<div class="t" style="left:609.60px;top:543.60px;font-size:15.6px;line-height:22px;color:#1c1c1c;transform:scaleX(0.8469);transform-origin:0 0;">23340004001</div>
<div class="t" style="left:1075.60px;top:563.60px;font-size:15.6px;line-height:22px;color:#1c1c1c;transform:scaleX(0.9276);transform-origin:0 0;">05/09/2023</div>
<div class="t" style="left:609.60px;top:563.60px;font-size:15.6px;line-height:22px;color:#1c1c1c;transform:scaleX(0.8469);transform-origin:0 0;">23340004001</div>
<div class="t" style="left:1075.60px;top:583.60px;font-size:15.6px;line-height:22px;color:#1c1c1c;transform:scaleX(0.9276);transform-origin:0 0;">05/09/2023</div>
<div class="t" style="left:609.60px;top:583.60px;font-size:15.6px;line-height:22px;color:#1c1c1c;transform:scaleX(0.8469);transform-origin:0 0;">23340004001</div>
<div class="t" style="left:1075.60px;top:603.60px;font-size:15.6px;line-height:22px;color:#1c1c1c;transform:scaleX(0.9276);transform-origin:0 0;">05/09/2023</div>
<div class="t" style="left:609.60px;top:603.60px;font-size:15.6px;line-height:22px;color:#1c1c1c;transform:scaleX(0.8469);transform-origin:0 0;">23340004001</div>
<div class="t" style="left:1075.60px;top:623.60px;font-size:15.6px;line-height:22px;color:#1c1c1c;transform:scaleX(0.9276);transform-origin:0 0;">05/09/2023</div>
<div class="t" style="left:609.60px;top:623.60px;font-size:15.6px;line-height:22px;color:#1c1c1c;transform:scaleX(0.8469);transform-origin:0 0;">23340004001</div>
<div class="t" style="left:1075.60px;top:643.60px;font-size:15.6px;line-height:22px;color:#1c1c1c;transform:scaleX(0.9276);transform-origin:0 0;">05/09/2023</div>
<div class="t" style="left:609.60px;top:643.60px;font-size:15.6px;line-height:22px;color:#1c1c1c;transform:scaleX(0.8469);transform-origin:0 0;">23340004001</div>
<div class="t" style="left:1075.60px;top:663.60px;font-size:15.6px;line-height:22px;color:#1c1c1c;transform:scaleX(0.9276);transform-origin:0 0;">05/09/2023</div>
<div class="t" style="left:609.60px;top:663.60px;font-size:15.6px;line-height:22px;color:#1c1c1c;transform:scaleX(0.8469);transform-origin:0 0;">23340004001</div>
<div class="t" style="left:1075.60px;top:683.60px;font-size:15.6px;line-height:22px;color:#1c1c1c;transform:scaleX(0.9276);transform-origin:0 0;">05/09/2023</div>
<div class="t" style="left:609.60px;top:683.60px;font-size:15.6px;line-height:22px;color:#1c1c1c;transform:scaleX(0.8469);transform-origin:0 0;">23340004001</div>
<div class="t" style="left:579.3px;top:225.6px;font-size:16px;line-height:20px;color:#1a1a1a;transform:scaleX(0.76);transform-origin:0 0;font-variant-ligatures:none;letter-spacing:0.2px">&gt;&gt;</div>
<div style="position:absolute;left:607px;top:223px;width:131px;height:21px;box-sizing:border-box;border:2px dotted #000;border-left:2px solid #000"></div>
<div style="position:absolute;left:620px;top:168px;width:384.6px;height:600px;background:#f2f2f2;box-shadow:2px 5px 4px rgba(0,0,0,0.5);box-sizing:border-box;border:1px solid #cfcfcf"></div>
<div class="t" style="left:663.80px;top:175.40px;font-size:14.6px;line-height:20px;color:#111;letter-spacing:0.102px;">Actualiser</div>
<div style="position:absolute;left:659px;top:203.40px;width:342px;height:1px;background:#d2d2d2"></div>
<div class="t" style="left:663.80px;top:211.65px;font-size:14.6px;line-height:20px;color:#111;letter-spacing:0.008px;">Déclaration Manuelle (F1)</div>
<div class="t" style="left:663.80px;top:239.15px;font-size:14.6px;line-height:20px;color:#111;letter-spacing:0.150px;">Déclaration Manuelle Complète (Maj+F1)</div>
<div class="t" style="left:663.80px;top:266.65px;font-size:14.6px;line-height:20px;color:#111;letter-spacing:-0.158px;">Déclaration Auto. Reste à Fab. (F9)</div>
<div class="t" style="left:663.80px;top:294.15px;font-size:14.6px;line-height:20px;color:#111;letter-spacing:0.164px;">Déclaration Auto. Qté. Cond.</div>
<div class="t" style="left:663.80px;top:321.65px;font-size:14.6px;line-height:20px;color:#111;letter-spacing:0.024px;">Déclaration Surplus</div>
<div class="t" style="left:663.80px;top:349.15px;font-size:14.6px;line-height:20px;color:#111;letter-spacing:0.023px;">Déclaration Rebut</div>
<div class="t" style="left:663.80px;top:376.65px;font-size:14.6px;line-height:20px;color:#111;letter-spacing:0.030px;">Déclaration Retour</div>
<div class="t" style="left:663.80px;top:404.15px;font-size:14.6px;line-height:20px;color:#111;letter-spacing:-0.333px;">Solde Etape</div>
<div style="position:absolute;left:659px;top:432.15px;width:342px;height:1px;background:#d2d2d2"></div>
<div class="t" style="left:663.80px;top:440.40px;font-size:14.6px;line-height:20px;color:#111;letter-spacing:0.136px;">Ordonnancement (F11)</div>
<div class="t" style="left:663.80px;top:467.90px;font-size:14.6px;line-height:20px;color:#111;letter-spacing:0.082px;">Reset Ordonnancement (Maj+F11)</div>
<div style="position:absolute;left:659px;top:495.90px;width:342px;height:1px;background:#d2d2d2"></div>
<div class="t" style="left:663.80px;top:504.15px;font-size:14.6px;line-height:20px;color:#111;letter-spacing:0.138px;">Affectation RL</div>
<svg style="position:absolute;left:983.8px;top:509.35px" width="6" height="10" viewBox="0 0 6 10" ><path d="M1 1 L5 5 L1 9" fill="none" stroke="#444" stroke-width="1.35"/></svg>
<div class="t" style="left:663.80px;top:531.65px;font-size:14.6px;line-height:20px;color:#111;letter-spacing:0.101px;">Affectation Sous-Traitance</div>
<svg style="position:absolute;left:983.8px;top:536.85px" width="6" height="10" viewBox="0 0 6 10" ><path d="M1 1 L5 5 L1 9" fill="none" stroke="#444" stroke-width="1.35"/></svg>
<div class="t" style="left:663.80px;top:559.15px;font-size:14.6px;line-height:20px;color:#111;letter-spacing:0.356px;">Affectation Substitution</div>
<svg style="position:absolute;left:983.8px;top:564.35px" width="6" height="10" viewBox="0 0 6 10" ><path d="M1 1 L5 5 L1 9" fill="none" stroke="#444" stroke-width="1.35"/></svg>
<div style="position:absolute;left:659px;top:587.15px;width:342px;height:1px;background:#d2d2d2"></div>
<div class="t" style="left:663.80px;top:595.40px;font-size:14.6px;line-height:20px;color:#111;letter-spacing:-0.009px;">Informations Suivies (F3)</div>
<div style="position:absolute;left:659px;top:623.40px;width:342px;height:1px;background:#d2d2d2"></div>
<div class="t" style="left:663.80px;top:631.65px;font-size:14.6px;line-height:20px;color:#111;letter-spacing:0.185px;">Déclaration Co-Produits</div>
<div style="position:absolute;left:659px;top:659.65px;width:342px;height:1px;background:#d2d2d2"></div>
<div style="position:absolute;left:624px;top:664.50px;width:377px;height:27px;background:#91c9f7"></div>
<div class="t" style="left:663.80px;top:667.90px;font-size:14.6px;line-height:20px;color:#111;letter-spacing:-0.341px;">Détail OF (F8)</div>
<div class="t" style="left:663.80px;top:695.40px;font-size:14.6px;line-height:20px;color:#111;letter-spacing:-0.195px;">His. Déc. FAT/ OF (Maj+F10)</div>
<svg style="position:absolute;left:878px;top:667.7px" width="20" height="32" viewBox="0 0 20 32" ><path d="M1.6 2 L1.6 24 L6.6 19.6 L10.6 29.4 L14.8 27.8 L11 18.6 L17.6 18.2z" fill="#fff" stroke="#fff" stroke-width="3.6" stroke-linejoin="round"/><path d="M1.6 2 L1.6 24 L6.6 19.6 L10.6 29.4 L14.8 27.8 L11 18.6 L17.6 18.2z" fill="#fff" stroke="#000" stroke-width="2.0" stroke-linejoin="miter"/></svg>
</body></html>
